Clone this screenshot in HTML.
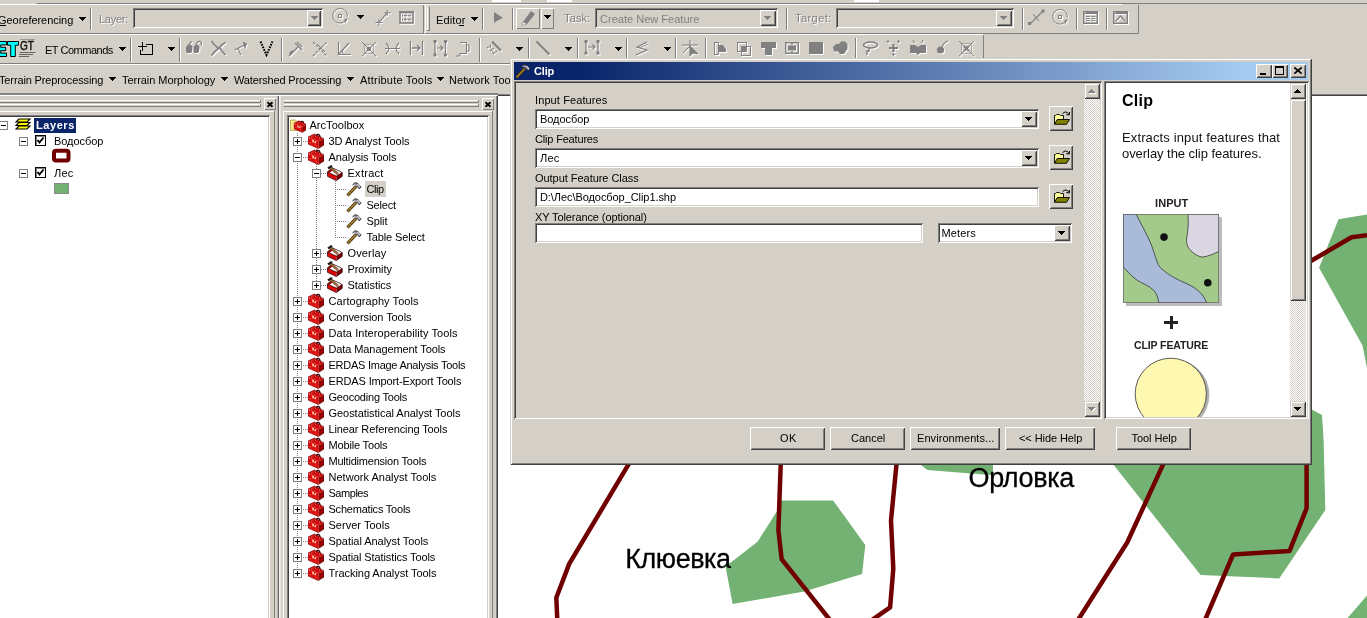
<!DOCTYPE html>
<html><head><meta charset="utf-8"><title>Clip</title><style>
html,body{margin:0;padding:0;}
body{width:1367px;height:618px;overflow:hidden;background:#D4D0C8;position:relative;font-family:"Liberation Sans",sans-serif;font-size:11px;}
div,span.t,svg{position:absolute;}
span.t{white-space:pre;display:block;}
</style></head><body>
<div id="w" style="left:0;top:0;width:1367px;height:618px;will-change:transform">
<div style="left:498px;top:96px;width:869px;height:522px;background:#fff"></div>
<svg style="left:0px;top:0px;" width="1367" height="618" viewBox="0 0 1367 618">
<g fill="#73B273" stroke="none">
<polygon points="781.3,500.4 833.1,500.4 865.3,544.9 862.1,573.9 804.1,591.6 732.6,604 725.6,566.5 757.5,541.8 777.2,510.7"/>
<polygon points="915,455 920.5,464.6 927.3,470 993,475.2 993,455"/>
<polygon points="1094,440 1200.6,575 1279.2,578.4 1325.3,510 1323.6,440 1322,415 1312.7,410 1290,400"/>
<polygon points="1338.5,219.2 1367,214.6 1367,368 1362.5,345.4 1319.1,267.7"/>
<polygon points="1367,595.4 1347.6,618 1367,618"/>
</g>
<g fill="none" stroke="#700000" stroke-width="4.500" stroke-linejoin="round">
<polyline points="640,445 628.7,464.1 569.2,563.9 556.3,597.7 557.3,620"/>
<polyline points="780.9,445 780.7,464.1 778.4,530.1 781.6,559.1 830,620"/>
<polyline points="897,445 896.5,464.1 891,520.5 893.3,568.7 890.1,607.4 872,620"/>
<polyline points="1172,445 1163,464.6 1127.2,542.5 1078,620"/>
<polyline points="1306.6,445 1306.6,508.3 1289.5,551 1233.1,554.5 1205,620"/>
<polyline points="1305,264.5 1312.6,260 1351.5,237.3 1367,235.3"/>
</g>
</svg>
<span id="t1" class="t " style="left:625.3px;top:545.5px;font-size:27px;line-height:27px;color:#000;letter-spacing:-0.463px;-webkit-text-stroke:0.300px #000;">Клюевка</span>
<span id="t2" class="t " style="left:968.5px;top:464.5px;font-size:27px;line-height:27px;color:#000;letter-spacing:-0.366px;-webkit-text-stroke:0.300px #000;">Орловка</span>
<div style="left:0px;top:0px;width:1367px;height:93px;background:#D4D0C8"></div>
<div style="left:37px;top:3px;width:1330px;height:1px;background:#808080"></div>
<div style="left:492px;top:0px;width:29px;height:2px;background:#fff"></div>
<div style="left:547px;top:0px;width:25px;height:2px;background:#fff"></div>
<div style="left:854px;top:0px;width:25px;height:2px;background:#fff"></div>
<div style="left:0px;top:4px;width:1122px;height:1px;background:#FFFFFF"></div>
<div style="left:0px;top:33px;width:424px;height:1px;background:#808080"></div>
<div style="left:423px;top:5px;width:1px;height:28px;background:#808080"></div>
<div style="left:425px;top:5px;width:1px;height:28px;background:#FFFFFF"></div>
<div style="left:425px;top:33px;width:714px;height:1px;background:#808080"></div>
<div style="left:1138px;top:5px;width:1px;height:29px;background:#808080"></div>
<div style="left:427px;top:7px;width:1px;height:23px;background:#FFFFFF"></div>
<div style="left:428px;top:7px;width:1px;height:23px;background:#D4D0C8"></div>
<div style="left:429px;top:7px;width:1px;height:23px;background:#808080"></div>
<div style="left:427px;top:30px;width:3px;height:1px;background:#808080"></div>
<span id="t3" class="t " style="left:-2px;top:15px;font-size:11px;line-height:11px;color:#000;letter-spacing:-0.039px;">Georeferencing</span>
<div style="left:0px;top:25px;width:6px;height:1px;background:#000"></div>
<div style="left:79px;top:17px;width:7px;height:1px;background:#000"></div>
<div style="left:80px;top:18px;width:5px;height:1px;background:#000"></div>
<div style="left:81px;top:19px;width:3px;height:1px;background:#000"></div>
<div style="left:82px;top:20px;width:1px;height:1px;background:#000"></div>
<div style="left:90px;top:8px;width:1px;height:22px;background:#808080"></div>
<div style="left:91px;top:8px;width:1px;height:22px;background:#FFFFFF"></div>
<span id="t4" class="t " style="left:100px;top:15px;font-size:11px;line-height:11px;color:#fff;letter-spacing:-0.252px;">Layer:</span>
<span id="t5" class="t " style="left:99px;top:14px;font-size:11px;line-height:11px;color:#808080;letter-spacing:-0.252px;">Layer:</span>
<div style="left:133px;top:8px;width:190px;height:20px;background:#D4D0C8;box-shadow:inset 1px 1px 0 #808080,inset -1px -1px 0 #FFFFFF,inset 2px 2px 0 #404040,inset -2px -2px 0 #D4D0C8;"></div>
<div style="left:307px;top:10px;width:14px;height:16px;background:#D4D0C8;box-shadow:inset 1px 1px 0 #FFFFFF,inset -1px -1px 0 #404040,inset 2px 2px 0 #D4D0C8,inset -2px -2px 0 #808080;"></div>
<div style="left:311px;top:16px;width:7px;height:1px;background:#808080"></div>
<div style="left:312px;top:17px;width:5px;height:1px;background:#808080"></div>
<div style="left:313px;top:18px;width:3px;height:1px;background:#808080"></div>
<div style="left:314px;top:19px;width:1px;height:1px;background:#808080"></div>
<svg style="left:332px;top:8px;" width="18" height="18" viewBox="0 0 18 18"><g transform="translate(1,1)"><path d="M14.300,11.500 A7.300,7.300 0 1 1 15.300,8.500" fill="none" stroke="#fff" stroke-width="1"/><rect x="6.500" y="6.500" width="3" height="3" fill="none" stroke="#fff"/><polygon points="12.500,11 15.800,10.500 13,15.500" fill="#fff"/></g><g><path d="M14.300,11.500 A7.300,7.300 0 1 1 15.300,8.500" fill="none" stroke="#808080" stroke-width="1"/><rect x="6.500" y="6.500" width="3" height="3" fill="none" stroke="#808080"/><polygon points="12.500,11 15.800,10.500 13,15.500" fill="#808080"/></g></svg>
<div style="left:357px;top:15px;width:7px;height:1px;background:#000"></div>
<div style="left:358px;top:16px;width:5px;height:1px;background:#000"></div>
<div style="left:359px;top:17px;width:3px;height:1px;background:#000"></div>
<div style="left:360px;top:18px;width:1px;height:1px;background:#000"></div>
<svg style="left:374px;top:9px;" width="19" height="19" viewBox="0 0 19 19"><g transform="translate(1,1)"><path d="M4.800,13.700 L13.200,3.800" stroke="#fff" stroke-width="1.100"/><path d="M1.500,13.500 h7 M4.800,10.500 v6.500 M10.300,3.800 h6.500 M13.200,1 v6" stroke="#fff" stroke-width="1"/></g><g><path d="M4.800,13.700 L13.200,3.800" stroke="#808080" stroke-width="1.100"/><path d="M1.500,13.500 h7 M4.800,10.500 v6.500 M10.300,3.800 h6.500 M13.200,1 v6" stroke="#808080" stroke-width="1"/></g></svg>
<svg style="left:399px;top:11px;" width="16" height="14" viewBox="0 0 16 14"><g transform="translate(1,1)"><rect x="1" y="1" width="13" height="11" fill="none" stroke="#fff" stroke-width="1.600"/><rect x="0.200" y="0.200" width="14.600" height="2.200" fill="#fff"/><path d="M3,4.500 h9 M3,8.500 h9" stroke="#fff" stroke-width="1" stroke-dasharray="1,1"/><path d="M3.500,3.500 v2 M6.500,3.500 v2 M11,3.500 v2 M3.500,7.500 v2 M6.500,7.500 v2 M11,7.500 v2" stroke="#fff" stroke-width="1"/></g><g><rect x="1" y="1" width="13" height="11" fill="none" stroke="#808080" stroke-width="1.600"/><rect x="0.200" y="0.200" width="14.600" height="2.200" fill="#808080"/><path d="M3,4.500 h9 M3,8.500 h9" stroke="#808080" stroke-width="1" stroke-dasharray="1,1"/><path d="M3.500,3.500 v2 M6.500,3.500 v2 M11,3.500 v2 M3.500,7.500 v2 M6.500,7.500 v2 M11,7.500 v2" stroke="#808080" stroke-width="1"/></g></svg>
<span id="t6" class="t " style="left:436px;top:15px;font-size:11px;line-height:11px;color:#000;letter-spacing:0.114px;">Editor</span>
<div style="left:459px;top:25px;width:5px;height:1px;background:#000"></div>
<div style="left:471px;top:17px;width:7px;height:1px;background:#000"></div>
<div style="left:472px;top:18px;width:5px;height:1px;background:#000"></div>
<div style="left:473px;top:19px;width:3px;height:1px;background:#000"></div>
<div style="left:474px;top:20px;width:1px;height:1px;background:#000"></div>
<div style="left:482px;top:8px;width:1px;height:22px;background:#808080"></div>
<div style="left:483px;top:8px;width:1px;height:22px;background:#FFFFFF"></div>
<svg style="left:492px;top:11px;" width="14" height="14" viewBox="0 0 14 14"><polygon points="2,1 2,12 5.5,9.5 11,7" fill="#808080"/></svg>
<div style="left:512px;top:8px;width:1px;height:22px;background:#808080"></div>
<div style="left:513px;top:8px;width:1px;height:22px;background:#FFFFFF"></div>
<div style="left:516px;top:8px;width:24px;height:21px;background:#D4D0C8;box-shadow:inset 1px 1px 0 #FFFFFF,inset -1px -1px 0 #808080;"></div>
<svg style="left:519px;top:9px;" width="18" height="18" viewBox="0 0 18 18"><polygon points="4,13 12,2 16,5 8,15 3,16.5" fill="#808080"/><polygon points="4,13 8,15 3,16.5" fill="#fff" stroke="#808080" stroke-width="0.6"/></svg>
<div style="left:541px;top:8px;width:13px;height:21px;background:#D4D0C8;box-shadow:inset 1px 1px 0 #FFFFFF,inset -1px -1px 0 #808080;"></div>
<div style="left:544px;top:15px;width:7px;height:1px;background:#000"></div>
<div style="left:545px;top:16px;width:5px;height:1px;background:#000"></div>
<div style="left:546px;top:17px;width:3px;height:1px;background:#000"></div>
<div style="left:547px;top:18px;width:1px;height:1px;background:#000"></div>
<span id="t7" class="t " style="left:565px;top:14px;font-size:11px;line-height:11px;color:#fff;letter-spacing:0.158px;">Task:</span>
<span id="t8" class="t " style="left:564px;top:13px;font-size:11px;line-height:11px;color:#808080;letter-spacing:0.158px;">Task:</span>
<div style="left:595px;top:8px;width:183px;height:20px;background:#D4D0C8;box-shadow:inset 1px 1px 0 #808080,inset -1px -1px 0 #FFFFFF,inset 2px 2px 0 #404040,inset -2px -2px 0 #D4D0C8;"></div>
<span id="t9" class="t " style="left:600px;top:14px;font-size:11px;line-height:11px;color:#808080;letter-spacing:0.016px;">Create New Feature</span>
<div style="left:760px;top:10px;width:16px;height:16px;background:#D4D0C8;box-shadow:inset 1px 1px 0 #FFFFFF,inset -1px -1px 0 #404040,inset 2px 2px 0 #D4D0C8,inset -2px -2px 0 #808080;"></div>
<div style="left:764px;top:16px;width:7px;height:1px;background:#808080"></div>
<div style="left:765px;top:17px;width:5px;height:1px;background:#808080"></div>
<div style="left:766px;top:18px;width:3px;height:1px;background:#808080"></div>
<div style="left:767px;top:19px;width:1px;height:1px;background:#808080"></div>
<div style="left:786px;top:8px;width:1px;height:22px;background:#808080"></div>
<div style="left:787px;top:8px;width:1px;height:22px;background:#FFFFFF"></div>
<span id="t10" class="t " style="left:796px;top:14px;font-size:11px;line-height:11px;color:#fff;letter-spacing:0.447px;">Target:</span>
<span id="t11" class="t " style="left:795px;top:13px;font-size:11px;line-height:11px;color:#808080;letter-spacing:0.447px;">Target:</span>
<div style="left:836px;top:8px;width:178px;height:20px;background:#D4D0C8;box-shadow:inset 1px 1px 0 #808080,inset -1px -1px 0 #FFFFFF,inset 2px 2px 0 #404040,inset -2px -2px 0 #D4D0C8;"></div>
<div style="left:996px;top:10px;width:16px;height:16px;background:#D4D0C8;box-shadow:inset 1px 1px 0 #FFFFFF,inset -1px -1px 0 #404040,inset 2px 2px 0 #D4D0C8,inset -2px -2px 0 #808080;"></div>
<div style="left:1000px;top:16px;width:7px;height:1px;background:#808080"></div>
<div style="left:1001px;top:17px;width:5px;height:1px;background:#808080"></div>
<div style="left:1002px;top:18px;width:3px;height:1px;background:#808080"></div>
<div style="left:1003px;top:19px;width:1px;height:1px;background:#808080"></div>
<div style="left:1022px;top:8px;width:1px;height:22px;background:#808080"></div>
<div style="left:1023px;top:8px;width:1px;height:22px;background:#FFFFFF"></div>
<svg style="left:1027px;top:8px;" width="20" height="20" viewBox="0 0 20 20"><path d="M3,16 L16,3" stroke="#808080" stroke-width="1.2"/><rect x="1" y="14" width="3" height="3" fill="#808080"/><rect x="14.5" y="1.5" width="3" height="3" fill="#808080"/><path d="M6,6 L12,13" stroke="#808080"/></svg>
<svg style="left:1052px;top:9px;" width="18" height="18" viewBox="0 0 18 18"><g transform="translate(1,1)"><path d="M14.300,11.500 A7.300,7.300 0 1 1 15.300,8.500" fill="none" stroke="#fff" stroke-width="1"/><rect x="6.500" y="6.500" width="3" height="3" fill="none" stroke="#fff"/><polygon points="12.500,11 15.800,10.500 13,15.500" fill="#fff"/></g><g><path d="M14.300,11.500 A7.300,7.300 0 1 1 15.300,8.500" fill="none" stroke="#808080" stroke-width="1"/><rect x="6.500" y="6.500" width="3" height="3" fill="none" stroke="#808080"/><polygon points="12.500,11 15.800,10.500 13,15.500" fill="#808080"/></g></svg>
<div style="left:1076px;top:8px;width:1px;height:22px;background:#808080"></div>
<div style="left:1077px;top:8px;width:1px;height:22px;background:#FFFFFF"></div>
<svg style="left:1083px;top:11px;" width="16" height="14" viewBox="0 0 16 14"><g transform="translate(1,1)"><rect x="0.750" y="0.750" width="13.500" height="11.500" fill="none" stroke="#fff" stroke-width="1.500"/><rect x="0" y="0" width="15" height="3" fill="#fff"/><rect x="1.500" y="1" width="1" height="1" fill="#fff"/><path d="M3,5.500 h4 M8.500,5.500 h4 M3,7.500 h4 M8.500,7.500 h4 M3,9.500 h4 M8.500,9.500 h4" stroke="#fff"/></g><g><rect x="0.750" y="0.750" width="13.500" height="11.500" fill="none" stroke="#808080" stroke-width="1.500"/><rect x="0" y="0" width="15" height="3" fill="#808080"/><rect x="1.500" y="1" width="1" height="1" fill="#fff"/><path d="M3,5.500 h4 M8.500,5.500 h4 M3,7.500 h4 M8.500,7.500 h4 M3,9.500 h4 M8.500,9.500 h4" stroke="#808080"/></g></svg>
<div style="left:1106px;top:8px;width:1px;height:22px;background:#808080"></div>
<div style="left:1107px;top:8px;width:1px;height:22px;background:#FFFFFF"></div>
<svg style="left:1113px;top:11px;" width="16" height="14" viewBox="0 0 16 14"><g transform="translate(1,1)"><rect x="0.750" y="0.750" width="13.500" height="11.500" fill="none" stroke="#fff" stroke-width="1.500"/><rect x="0" y="0" width="15" height="3" fill="#fff"/><rect x="1.500" y="1" width="1" height="1" fill="#fff"/><path d="M2.500,10.500 L7.500,5 L12.500,10.500" fill="none" stroke="#fff" stroke-width="1.200"/></g><g><rect x="0.750" y="0.750" width="13.500" height="11.500" fill="none" stroke="#808080" stroke-width="1.500"/><rect x="0" y="0" width="15" height="3" fill="#808080"/><rect x="1.500" y="1" width="1" height="1" fill="#fff"/><path d="M2.500,10.500 L7.500,5 L12.500,10.500" fill="none" stroke="#808080" stroke-width="1.200"/></g></svg>
<div style="left:0px;top:34px;width:983px;height:1px;background:#FFFFFF"></div>
<div style="left:0px;top:63px;width:984px;height:1px;background:#808080"></div>
<div style="left:983px;top:35px;width:1px;height:28px;background:#808080"></div>
<svg style="left:0px;top:38px;" width="38" height="24" viewBox="0 0 38 24"><g fill="#00FFFF" stroke="#000" stroke-width="1">
<path d="M-3.5,3.5 h10 v3.400 h-5.800 v2.400 h5 v3.400 h-5 v2.400 h5.800 v3.400 h-10 z"/>
<path d="M7.500,3.500 h11 v3.700 h-3.200 v11.300 h-4.600 v-11.300 h-3.200 z"/></g>
<text x="20" y="12.300" font-family="Liberation Sans" font-size="12" fill="#111" stroke="#111" stroke-width="0.450" textLength="14" lengthAdjust="spacingAndGlyphs">GT</text>
<path d="M20,1.500 h15" stroke="#999" stroke-width="1"/>
<path d="M19.500,14.500 h16 M19,16.500 h14 M19,18.500 h10" stroke="#666" stroke-width="1"/></svg>
<span id="t12" class="t " style="left:45px;top:45px;font-size:11px;line-height:11px;color:#000;letter-spacing:-0.484px;">ET Commands</span>
<div style="left:119px;top:47px;width:7px;height:1px;background:#000"></div>
<div style="left:120px;top:48px;width:5px;height:1px;background:#000"></div>
<div style="left:121px;top:49px;width:3px;height:1px;background:#000"></div>
<div style="left:122px;top:50px;width:1px;height:1px;background:#000"></div>
<div style="left:130px;top:38px;width:1px;height:24px;background:#808080"></div>
<div style="left:131px;top:38px;width:1px;height:24px;background:#FFFFFF"></div>
<svg style="left:137px;top:39px;" width="18" height="18" viewBox="0 0 18 18"><rect x="3.500" y="5.500" width="12" height="10" fill="none" stroke="#000"/><rect x="2" y="4" width="7" height="7" fill="#D4D0C8"/><path d="M3.500,11 v4 M9,5.500 h6" stroke="#000"/><path d="M1,7.500 h9 M5.500,3 v9" stroke="#000"/></svg>
<div style="left:168px;top:47px;width:7px;height:1px;background:#000"></div>
<div style="left:169px;top:48px;width:5px;height:1px;background:#000"></div>
<div style="left:170px;top:49px;width:3px;height:1px;background:#000"></div>
<div style="left:171px;top:50px;width:1px;height:1px;background:#000"></div>
<div style="left:179px;top:38px;width:1px;height:24px;background:#808080"></div>
<div style="left:180px;top:38px;width:1px;height:24px;background:#FFFFFF"></div>
<svg style="left:185px;top:40px;" width="19" height="17" viewBox="0 0 19 17"><g transform="translate(1,1)"><polygon points="1,7 3,4.700 6.500,4.700 7.500,6.500 7,12 5.500,13 2,13 1,11.500" fill="#fff"/><polygon points="8.500,7 10.500,4.700 13.500,4.700 14.500,6.500 14,12 12.500,13 9.500,13 8.500,11.500" fill="#fff"/><path d="M3.500,5 L6.500,1.500 M10.500,5 L13,1.500 M13,1.500 Q16.500,0.500 16.500,5.500" fill="none" stroke="#fff" stroke-width="1.200"/></g><g><polygon points="1,7 3,4.700 6.500,4.700 7.500,6.500 7,12 5.500,13 2,13 1,11.500" fill="#808080"/><polygon points="8.500,7 10.500,4.700 13.500,4.700 14.500,6.500 14,12 12.500,13 9.500,13 8.500,11.500" fill="#808080"/><path d="M3.500,5 L6.500,1.500 M10.500,5 L13,1.500 M13,1.500 Q16.500,0.500 16.500,5.500" fill="none" stroke="#808080" stroke-width="1.200"/></g></svg>
<svg style="left:210px;top:40px;" width="18" height="18" viewBox="0 0 18 18"><g transform="translate(1,1)"><path d="M1.500,1 Q4,5 8.500,8.500 Q5,11 1.500,15.500 M15.500,2.500 Q11.500,4.500 9.500,7.500 Q12,11 15.500,15" fill="none" stroke="#fff" stroke-width="1.600"/></g><g><path d="M1.500,1 Q4,5 8.500,8.500 Q5,11 1.500,15.500 M15.500,2.500 Q11.500,4.500 9.500,7.500 Q12,11 15.500,15" fill="none" stroke="#808080" stroke-width="1.600"/></g></svg>
<svg style="left:234px;top:41px;" width="15" height="16" viewBox="0 0 15 16"><g transform="translate(1,1)"><path d="M0.500,9 L12.500,3 M4,7.500 L7,14 M9.500,1.500 L12.500,3 L11,6.500 Z" fill="#fff" stroke="#fff" stroke-width="1.100"/></g><g><path d="M0.500,9 L12.500,3 M4,7.500 L7,14 M9.500,1.500 L12.500,3 L11,6.500 Z" fill="#808080" stroke="#808080" stroke-width="1.100"/></g></svg>
<svg style="left:259px;top:40px;" width="16" height="17" viewBox="0 0 16 17"><path d="M1.500,1.500 L7.500,15 L13.500,1.500" fill="none" stroke="#000" stroke-width="2" stroke-dasharray="1.700,1.100"/></svg>
<div style="left:281px;top:38px;width:1px;height:24px;background:#808080"></div>
<div style="left:282px;top:38px;width:1px;height:24px;background:#FFFFFF"></div>
<svg style="left:288px;top:41px;" width="18" height="17" viewBox="0 0 18 17"><g transform="translate(1,1)"><path d="M1,15 L10,6 M7,2 L14,9 M9,1 l5,5" fill="none" stroke="#fff" stroke-width="1.3"/><path d="M2,13 l3,-3" stroke="#fff" stroke-width="2.5"/></g><g><path d="M1,15 L10,6 M7,2 L14,9 M9,1 l5,5" fill="none" stroke="#808080" stroke-width="1.3"/><path d="M2,13 l3,-3" stroke="#808080" stroke-width="2.5"/></g></svg>
<svg style="left:312px;top:41px;" width="18" height="17" viewBox="0 0 18 17"><g transform="translate(1,1)"><path d="M1,15 L15,1 M1,1 L15,15" fill="none" stroke="#fff" stroke-width="1.2" stroke-dasharray="3,1"/><path d="M5,3 L13,11" stroke="#fff" stroke-width="1"/></g><g><path d="M1,15 L15,1 M1,1 L15,15" fill="none" stroke="#808080" stroke-width="1.2" stroke-dasharray="3,1"/><path d="M5,3 L13,11" stroke="#808080" stroke-width="1"/></g></svg>
<svg style="left:337px;top:41px;" width="16" height="16" viewBox="0 0 16 16"><g transform="translate(1,1)"><path d="M1.5,1 V13.500 H14 M1.5,13.5 L12,2" fill="none" stroke="#fff" stroke-width="1.2"/><path d="M6,13 a5,5 0 0 0 -2,-4" fill="none" stroke="#fff"/></g><g><path d="M1.5,1 V13.500 H14 M1.5,13.5 L12,2" fill="none" stroke="#808080" stroke-width="1.2"/><path d="M6,13 a5,5 0 0 0 -2,-4" fill="none" stroke="#808080"/></g></svg>
<svg style="left:361px;top:41px;" width="17" height="17" viewBox="0 0 17 17"><g transform="translate(1,1)"><path d="M1,1 L15,15 M15,1 L1,15" stroke="#fff" stroke-width="1"/><rect x="3.5" y="3.5" width="9" height="9" fill="none" stroke="#fff" stroke-dasharray="1,1"/><rect x="6" y="6" width="4" height="4" fill="#fff"/></g><g><path d="M1,1 L15,15 M15,1 L1,15" stroke="#808080" stroke-width="1"/><rect x="3.5" y="3.5" width="9" height="9" fill="none" stroke="#808080" stroke-dasharray="1,1"/><rect x="6" y="6" width="4" height="4" fill="#808080"/></g></svg>
<svg style="left:385px;top:42px;" width="16" height="14" viewBox="0 0 16 14"><g transform="translate(1,1)"><path d="M1,1 Q7,6.500 1,12 M14,1 Q8,6.500 14,12 M0,6.500 H15" fill="none" stroke="#fff" stroke-width="1.2"/></g><g><path d="M1,1 Q7,6.500 1,12 M14,1 Q8,6.500 14,12 M0,6.500 H15" fill="none" stroke="#808080" stroke-width="1.2"/></g></svg>
<svg style="left:409px;top:41px;" width="16" height="16" viewBox="0 0 16 16"><g transform="translate(1,1)"><path d="M1.500,0 V14 M13.500,0 V14 M3,7 H11 M8,4 l3,3 l-3,3" fill="none" stroke="#fff" stroke-width="1.3"/></g><g><path d="M1.500,0 V14 M13.500,0 V14 M3,7 H11 M8,4 l3,3 l-3,3" fill="none" stroke="#808080" stroke-width="1.3"/></g></svg>
<svg style="left:433px;top:40px;" width="16" height="18" viewBox="0 0 16 18"><g transform="translate(1,1)"><path d="M2,1 V15 M12.500,1 V15 M4,8 H10 M7.500,5.500 l2.500,2.500 l-2.500,2.500" fill="none" stroke="#fff" stroke-width="1.2"/><circle cx="2" cy="1.500" r="1.700" fill="#fff"/><circle cx="2" cy="15" r="1.700" fill="#fff"/><circle cx="12.500" cy="1.500" r="1.700" fill="#fff"/><circle cx="12.500" cy="15" r="1.700" fill="#fff"/></g><g><path d="M2,1 V15 M12.500,1 V15 M4,8 H10 M7.500,5.500 l2.500,2.500 l-2.500,2.500" fill="none" stroke="#808080" stroke-width="1.2"/><circle cx="2" cy="1.500" r="1.700" fill="#808080"/><circle cx="2" cy="15" r="1.700" fill="#808080"/><circle cx="12.500" cy="1.500" r="1.700" fill="#808080"/><circle cx="12.500" cy="15" r="1.700" fill="#808080"/></g></svg>
<svg style="left:456px;top:41px;" width="17" height="17" viewBox="0 0 17 17"><g transform="translate(1,1)"><path d="M4,1.500 H10.500 V4 H13 V10 H10.500 V12.500 H4 V15 H0" fill="none" stroke="#fff" stroke-width="1.100"/><path d="M10.500,4 V10" stroke="#fff"/></g><g><path d="M4,1.500 H10.500 V4 H13 V10 H10.500 V12.500 H4 V15 H0" fill="none" stroke="#808080" stroke-width="1.100"/><path d="M10.500,4 V10" stroke="#808080"/></g></svg>
<div style="left:479px;top:38px;width:1px;height:24px;background:#808080"></div>
<div style="left:480px;top:38px;width:1px;height:24px;background:#FFFFFF"></div>
<svg style="left:486px;top:41px;" width="18" height="17" viewBox="0 0 18 17"><g transform="translate(1,1)"><path d="M6,0.500 L15,9.500" stroke="#fff" stroke-width="2.200"/><path d="M1,7 l4,-3 M4,10 l4,-3 M7,13 l4,-3 M4,5 l3,7" stroke="#fff" stroke-width="1.100" stroke-dasharray="2,1"/></g><g><path d="M6,0.500 L15,9.500" stroke="#808080" stroke-width="2.200"/><path d="M1,7 l4,-3 M4,10 l4,-3 M7,13 l4,-3 M4,5 l3,7" stroke="#808080" stroke-width="1.100" stroke-dasharray="2,1"/></g></svg>
<div style="left:516px;top:47px;width:7px;height:1px;background:#000"></div>
<div style="left:517px;top:48px;width:5px;height:1px;background:#000"></div>
<div style="left:518px;top:49px;width:3px;height:1px;background:#000"></div>
<div style="left:519px;top:50px;width:1px;height:1px;background:#000"></div>
<div style="left:528px;top:38px;width:1px;height:24px;background:#808080"></div>
<div style="left:529px;top:38px;width:1px;height:24px;background:#FFFFFF"></div>
<svg style="left:536px;top:41px;" width="16" height="16" viewBox="0 0 16 16"><g transform="translate(1,1)"><path d="M0.500,0.500 L13.500,13.500" stroke="#fff" stroke-width="2"/></g><g><path d="M0.500,0.500 L13.500,13.500" stroke="#808080" stroke-width="2"/></g></svg>
<div style="left:565px;top:47px;width:7px;height:1px;background:#000"></div>
<div style="left:566px;top:48px;width:5px;height:1px;background:#000"></div>
<div style="left:567px;top:49px;width:3px;height:1px;background:#000"></div>
<div style="left:568px;top:50px;width:1px;height:1px;background:#000"></div>
<div style="left:577px;top:38px;width:1px;height:24px;background:#808080"></div>
<div style="left:578px;top:38px;width:1px;height:24px;background:#FFFFFF"></div>
<svg style="left:584px;top:40px;" width="18" height="16" viewBox="0 0 18 16"><g transform="translate(1,1)"><path d="M2,1 V13 M14,1 V13 M4,7 H11 M8.500,4.500 l2.500,2.500 l-2.500,2.500" fill="none" stroke="#fff" stroke-width="1.200"/><rect x="0.500" y="0" width="3" height="3" fill="#fff"/><rect x="0.500" y="11.500" width="3" height="3" fill="#fff"/><rect x="12.500" y="0" width="3" height="3" fill="#fff"/><rect x="12.500" y="11.500" width="3" height="3" fill="#fff"/></g><g><path d="M2,1 V13 M14,1 V13 M4,7 H11 M8.500,4.500 l2.500,2.500 l-2.500,2.500" fill="none" stroke="#808080" stroke-width="1.200"/><rect x="0.500" y="0" width="3" height="3" fill="#808080"/><rect x="0.500" y="11.500" width="3" height="3" fill="#808080"/><rect x="12.500" y="0" width="3" height="3" fill="#808080"/><rect x="12.500" y="11.500" width="3" height="3" fill="#808080"/></g></svg>
<div style="left:615px;top:47px;width:7px;height:1px;background:#000"></div>
<div style="left:616px;top:48px;width:5px;height:1px;background:#000"></div>
<div style="left:617px;top:49px;width:3px;height:1px;background:#000"></div>
<div style="left:618px;top:50px;width:1px;height:1px;background:#000"></div>
<div style="left:626px;top:38px;width:1px;height:24px;background:#808080"></div>
<div style="left:627px;top:38px;width:1px;height:24px;background:#FFFFFF"></div>
<svg style="left:635px;top:41px;" width="15" height="16" viewBox="0 0 15 16"><g transform="translate(1,1)"><path d="M12,1 L2,6 L12,9 L1,14" fill="none" stroke="#fff" stroke-width="1.100"/><path d="M13,3 L4,7" stroke="#fff" stroke-width="0.800"/></g><g><path d="M12,1 L2,6 L12,9 L1,14" fill="none" stroke="#808080" stroke-width="1.100"/><path d="M13,3 L4,7" stroke="#808080" stroke-width="0.800"/></g></svg>
<div style="left:664px;top:47px;width:7px;height:1px;background:#000"></div>
<div style="left:665px;top:48px;width:5px;height:1px;background:#000"></div>
<div style="left:666px;top:49px;width:3px;height:1px;background:#000"></div>
<div style="left:667px;top:50px;width:1px;height:1px;background:#000"></div>
<div style="left:675px;top:38px;width:1px;height:24px;background:#808080"></div>
<div style="left:676px;top:38px;width:1px;height:24px;background:#FFFFFF"></div>
<svg style="left:681px;top:40px;" width="19" height="17" viewBox="0 0 19 17"><g transform="translate(1,1)"><path d="M9,0 V8 M1,5 H17 M2,13 L9,6 M9,6 l0,10 l3,-3 l5,1 z" fill="#fff" stroke="#fff" stroke-width="1"/></g><g><path d="M9,0 V8 M1,5 H17 M2,13 L9,6 M9,6 l0,10 l3,-3 l5,1 z" fill="#808080" stroke="#808080" stroke-width="1"/></g></svg>
<div style="left:705px;top:38px;width:1px;height:24px;background:#808080"></div>
<div style="left:706px;top:38px;width:1px;height:24px;background:#FFFFFF"></div>
<svg style="left:713px;top:41px;" width="15" height="16" viewBox="0 0 15 16"><g transform="translate(1,1)"><rect x="1.500" y="1.500" width="4" height="12" fill="none" stroke="#fff"/><polygon points="6,4 10,4 13,8 13,11 6,11" fill="#fff"/></g><g><rect x="1.500" y="1.500" width="4" height="12" fill="none" stroke="#808080"/><polygon points="6,4 10,4 13,8 13,11 6,11" fill="#808080"/></g></svg>
<svg style="left:736px;top:41px;" width="17" height="17" viewBox="0 0 17 17"><g transform="translate(1,1)"><rect x="1.500" y="1.500" width="9" height="9" fill="none" stroke="#fff"/><rect x="5.500" y="5.500" width="9" height="9" fill="none" stroke="#fff"/><rect x="6" y="6" width="4.500" height="4.500" fill="#fff"/></g><g><rect x="1.500" y="1.500" width="9" height="9" fill="none" stroke="#808080"/><rect x="5.500" y="5.500" width="9" height="9" fill="none" stroke="#808080"/><rect x="6" y="6" width="4.500" height="4.500" fill="#808080"/></g></svg>
<svg style="left:761px;top:42px;" width="17" height="15" viewBox="0 0 17 15"><g transform="translate(1,1)"><polygon points="0,0 15,0 15,6 11,6 11,13 4,13 4,6 0,6" fill="#fff"/></g><g><polygon points="0,0 15,0 15,6 11,6 11,13 4,13 4,6 0,6" fill="#808080"/></g></svg>
<svg style="left:785px;top:42px;" width="15" height="13" viewBox="0 0 15 13"><g transform="translate(1,1)"><rect x="0.700" y="0.700" width="12.600" height="10.600" fill="none" stroke="#fff" stroke-width="1.400"/><rect x="3" y="3.500" width="8" height="5" fill="#fff"/><path d="M7,0 v3 M7,9 v3" stroke="#fff" stroke-width="1.500"/></g><g><rect x="0.700" y="0.700" width="12.600" height="10.600" fill="none" stroke="#808080" stroke-width="1.400"/><rect x="3" y="3.500" width="8" height="5" fill="#808080"/><path d="M7,0 v3 M7,9 v3" stroke="#808080" stroke-width="1.500"/></g></svg>
<svg style="left:809px;top:42px;" width="15" height="13" viewBox="0 0 15 13"><g transform="translate(1,1)"><rect x="0" y="0" width="14" height="12" fill="#fff"/></g><g><rect x="0" y="0" width="14" height="12" fill="#808080"/></g></svg>
<svg style="left:833px;top:41px;" width="16" height="15" viewBox="0 0 16 15"><g transform="translate(1,1)"><path d="M0,6 L3,3 H6 L8,0.500 H12 L14.500,3 V8 L11,13 H7 L5,10.500 H1 Z" fill="#fff"/></g><g><path d="M0,6 L3,3 H6 L8,0.500 H12 L14.500,3 V8 L11,13 H7 L5,10.500 H1 Z" fill="#808080"/></g></svg>
<div style="left:855px;top:38px;width:1px;height:24px;background:#808080"></div>
<div style="left:856px;top:38px;width:1px;height:24px;background:#FFFFFF"></div>
<svg style="left:862px;top:41px;" width="18" height="16" viewBox="0 0 18 16"><g transform="translate(1,1)"><ellipse cx="8.500" cy="4" rx="7" ry="3" fill="none" stroke="#fff" stroke-width="1.600"/><path d="M7,7 V10 H5 V14" fill="none" stroke="#fff" stroke-width="1.500"/></g><g><ellipse cx="8.500" cy="4" rx="7" ry="3" fill="none" stroke="#808080" stroke-width="1.600"/><path d="M7,7 V10 H5 V14" fill="none" stroke="#808080" stroke-width="1.500"/></g></svg>
<svg style="left:886px;top:40px;" width="16" height="17" viewBox="0 0 16 17"><g transform="translate(1,1)"><path d="M7.500,4 V12 M3,8 H12" stroke="#fff" stroke-width="2.200"/><path d="M2,0 v3 M0.500,1.500 h3 M12.500,0 v3 M11,1.500 h3 M7.500,13 v3 M6,14.500 h3" stroke="#fff" stroke-width="0.900"/></g><g><path d="M7.500,4 V12 M3,8 H12" stroke="#808080" stroke-width="2.200"/><path d="M2,0 v3 M0.500,1.500 h3 M12.500,0 v3 M11,1.500 h3 M7.500,13 v3 M6,14.500 h3" stroke="#808080" stroke-width="0.900"/></g></svg>
<svg style="left:910px;top:40px;" width="18" height="16" viewBox="0 0 18 16"><g transform="translate(1,1)"><path d="M0,5 H5 L8,7 L11,5 H16 V13 H10 L8,15 L6,13 H0 Z" fill="#fff"/><path d="M3,0 l1.500,3 M13,0 l-1.500,3" stroke="#fff"/></g><g><path d="M0,5 H5 L8,7 L11,5 H16 V13 H10 L8,15 L6,13 H0 Z" fill="#808080"/><path d="M3,0 l1.500,3 M13,0 l-1.500,3" stroke="#808080"/></g></svg>
<svg style="left:936px;top:40px;" width="14" height="16" viewBox="0 0 14 16"><g transform="translate(1,1)"><circle cx="4.500" cy="10" r="3.600" fill="#fff"/><path d="M6,7 Q8,2 12,1" fill="none" stroke="#fff" stroke-width="1.200"/></g><g><circle cx="4.500" cy="10" r="3.600" fill="#808080"/><path d="M6,7 Q8,2 12,1" fill="none" stroke="#808080" stroke-width="1.200"/></g></svg>
<svg style="left:958px;top:40px;" width="19" height="18" viewBox="0 0 19 18"><g transform="translate(1,1)"><path d="M1,1 L16,16 M16,1 L1,16" stroke="#fff" stroke-width="0.900"/><rect x="3.500" y="3.500" width="10" height="10" fill="none" stroke="#fff" stroke-dasharray="1,1"/><path d="M6,6 L11,11 M11,6 L6,11" stroke="#fff" stroke-width="2"/></g><g><path d="M1,1 L16,16 M16,1 L1,16" stroke="#808080" stroke-width="0.900"/><rect x="3.500" y="3.500" width="10" height="10" fill="none" stroke="#808080" stroke-dasharray="1,1"/><path d="M6,6 L11,11 M11,6 L6,11" stroke="#808080" stroke-width="2"/></g></svg>
<div style="left:0px;top:64px;width:1312px;height:1px;background:#FFFFFF"></div>
<span id="t13" class="t " style="left:-1px;top:75px;font-size:11px;line-height:11px;color:#000;letter-spacing:-0.134px;">Terrain Preprocessing</span>
<div style="left:109px;top:77px;width:7px;height:1px;background:#000"></div>
<div style="left:110px;top:78px;width:5px;height:1px;background:#000"></div>
<div style="left:111px;top:79px;width:3px;height:1px;background:#000"></div>
<div style="left:112px;top:80px;width:1px;height:1px;background:#000"></div>
<span id="t14" class="t " style="left:122px;top:75px;font-size:11px;line-height:11px;color:#000;letter-spacing:-0.049px;">Terrain Morphology</span>
<div style="left:221px;top:77px;width:7px;height:1px;background:#000"></div>
<div style="left:222px;top:78px;width:5px;height:1px;background:#000"></div>
<div style="left:223px;top:79px;width:3px;height:1px;background:#000"></div>
<div style="left:224px;top:80px;width:1px;height:1px;background:#000"></div>
<span id="t15" class="t " style="left:234px;top:75px;font-size:11px;line-height:11px;color:#000;letter-spacing:-0.155px;">Watershed Processing</span>
<div style="left:347px;top:77px;width:7px;height:1px;background:#000"></div>
<div style="left:348px;top:78px;width:5px;height:1px;background:#000"></div>
<div style="left:349px;top:79px;width:3px;height:1px;background:#000"></div>
<div style="left:350px;top:80px;width:1px;height:1px;background:#000"></div>
<span id="t16" class="t " style="left:360px;top:75px;font-size:11px;line-height:11px;color:#000;letter-spacing:0.200px;">Attribute Tools</span>
<div style="left:437px;top:77px;width:7px;height:1px;background:#000"></div>
<div style="left:438px;top:78px;width:5px;height:1px;background:#000"></div>
<div style="left:439px;top:79px;width:3px;height:1px;background:#000"></div>
<div style="left:440px;top:80px;width:1px;height:1px;background:#000"></div>
<span id="t17" class="t " style="left:449px;top:75px;font-size:11px;line-height:11px;color:#000;letter-spacing:0.077px;">Network Tools</span>
<div style="left:527px;top:77px;width:7px;height:1px;background:#000"></div>
<div style="left:528px;top:78px;width:5px;height:1px;background:#000"></div>
<div style="left:529px;top:79px;width:3px;height:1px;background:#000"></div>
<div style="left:530px;top:80px;width:1px;height:1px;background:#000"></div>
<div style="left:0px;top:93px;width:498px;height:1px;background:#808080"></div>
<div style="left:0px;top:94px;width:498px;height:1px;background:#8c8a86"></div>
<div style="left:498px;top:94px;width:869px;height:1px;background:#808080"></div>
<div style="left:498px;top:95px;width:869px;height:1px;background:#404040"></div>
<div style="left:0px;top:95px;width:498px;height:523px;background:#D4D0C8"></div>
<div style="left:0px;top:95px;width:497px;height:1px;background:#FFFFFF"></div>
<div style="left:0px;top:100px;width:261px;height:1px;background:#FFFFFF"></div>
<div style="left:0px;top:101px;width:261px;height:1px;background:#D4D0C8"></div>
<div style="left:0px;top:102px;width:261px;height:1px;background:#808080"></div>
<div style="left:260px;top:100px;width:1px;height:3px;background:#808080"></div>
<div style="left:0px;top:104px;width:261px;height:1px;background:#FFFFFF"></div>
<div style="left:0px;top:105px;width:261px;height:1px;background:#D4D0C8"></div>
<div style="left:0px;top:106px;width:261px;height:1px;background:#808080"></div>
<div style="left:260px;top:104px;width:1px;height:3px;background:#808080"></div>
<div style="left:264px;top:98px;width:12px;height:12px;background:#D4D0C8;box-shadow:inset 1px 1px 0 #FFFFFF,inset -1px -1px 0 #808080;"></div>
<svg style="left:266px;top:100px;" width="8" height="8" viewBox="0 0 8 8"><path d="M1.500,2.300 L6.500,6.700 M6.500,2.300 L1.500,6.700" stroke="#000" stroke-width="1.800"/></svg>
<div style="left:277px;top:96px;width:1px;height:522px;background:#bab6ae"></div>
<div style="left:278px;top:96px;width:1px;height:522px;background:#646464"></div>
<div style="left:279px;top:96px;width:1px;height:522px;background:#f2f2f2"></div>
<div style="left:280px;top:96px;width:1px;height:522px;background:#e6e4e0"></div>
<div style="left:0px;top:111px;width:274px;height:1px;background:#FFFFFF"></div>
<div style="left:274px;top:111px;width:1px;height:507px;background:#808080"></div>
<div style="left:-2px;top:115px;width:272px;height:520px;background:#fff;box-shadow:inset 1px 1px 0 #808080,inset -1px -1px 0 #FFFFFF,inset 2px 2px 0 #404040,inset -2px -2px 0 #D4D0C8;"></div>
<div style="left:284px;top:100px;width:195px;height:1px;background:#FFFFFF"></div>
<div style="left:284px;top:101px;width:195px;height:1px;background:#D4D0C8"></div>
<div style="left:284px;top:102px;width:195px;height:1px;background:#808080"></div>
<div style="left:478px;top:100px;width:1px;height:3px;background:#808080"></div>
<div style="left:284px;top:104px;width:195px;height:1px;background:#FFFFFF"></div>
<div style="left:284px;top:105px;width:195px;height:1px;background:#D4D0C8"></div>
<div style="left:284px;top:106px;width:195px;height:1px;background:#808080"></div>
<div style="left:478px;top:104px;width:1px;height:3px;background:#808080"></div>
<div style="left:482px;top:98px;width:12px;height:12px;background:#D4D0C8;box-shadow:inset 1px 1px 0 #FFFFFF,inset -1px -1px 0 #808080;"></div>
<svg style="left:484px;top:100px;" width="8" height="8" viewBox="0 0 8 8"><path d="M1.500,2.300 L6.500,6.700 M6.500,2.300 L1.500,6.700" stroke="#000" stroke-width="1.800"/></svg>
<div style="left:496px;top:96px;width:1px;height:522px;background:#808080"></div>
<div style="left:497px;top:96px;width:1px;height:522px;background:#404040"></div>
<div style="left:283px;top:111px;width:210px;height:1px;background:#FFFFFF"></div>
<div style="left:283px;top:111px;width:1px;height:507px;background:#FFFFFF"></div>
<div style="left:492px;top:111px;width:1px;height:507px;background:#808080"></div>
<div style="left:287px;top:115px;width:202px;height:520px;background:#fff;box-shadow:inset 1px 1px 0 #808080,inset -1px -1px 0 #FFFFFF,inset 2px 2px 0 #404040,inset -2px -2px 0 #D4D0C8;"></div>
<div style="left:-1px;top:121px;width:9px;height:9px;background:#fff;border:1px solid #808080;width:7px;height:7px"></div>
<div style="left:1px;top:125px;width:5px;height:1px;background:#000"></div>
<svg style="left:15px;top:117px;" width="17" height="16" viewBox="0 0 17 16"><g stroke="#000" stroke-width="1.100" fill="#FFFF00">
<polygon points="1,12 4,9 15,9 12,12"/><polygon points="1,8.500 4,5.500 15,5.500 12,8.500"/><polygon points="1,5 4,2 15,2 12,5"/></g></svg>
<div style="left:34px;top:118px;width:42px;height:15px;background:#0A246A"></div>
<span id="t18" class="t " style="left:36px;top:120px;font-size:11px;line-height:11px;color:#fff;font-weight:bold;letter-spacing:0.567px;">Layers</span>
<div style="left:19px;top:137px;width:9px;height:9px;background:#fff;border:1px solid #808080;width:7px;height:7px"></div>
<div style="left:21px;top:141px;width:5px;height:1px;background:#000"></div>
<div style="left:35px;top:135px;width:11px;height:11px;background:#fff;border:1px solid #000;width:9px;height:9px;box-shadow:inset 1px 1px 0 #808080"></div>
<svg style="left:36px;top:136px;" width="9" height="9" viewBox="0 0 9 9"><path d="M1.500,4 L3.500,6.500 L7.500,1.500" fill="none" stroke="#000" stroke-width="2"/></svg>
<span id="t19" class="t " style="left:54px;top:136px;font-size:11px;line-height:11px;color:#000;letter-spacing:-0.068px;">Водосбор</span>
<svg style="left:51px;top:148px;" width="21" height="16" viewBox="0 0 21 16"><rect x="3" y="2.700" width="14.500" height="9.800" rx="2" fill="#fff" stroke="#700000" stroke-width="4"/></svg>
<div style="left:19px;top:169px;width:9px;height:9px;background:#fff;border:1px solid #808080;width:7px;height:7px"></div>
<div style="left:21px;top:173px;width:5px;height:1px;background:#000"></div>
<div style="left:35px;top:167px;width:11px;height:11px;background:#fff;border:1px solid #000;width:9px;height:9px;box-shadow:inset 1px 1px 0 #808080"></div>
<svg style="left:36px;top:168px;" width="9" height="9" viewBox="0 0 9 9"><path d="M1.500,4 L3.500,6.500 L7.500,1.500" fill="none" stroke="#000" stroke-width="2"/></svg>
<span id="t20" class="t " style="left:54px;top:168px;font-size:11px;line-height:11px;color:#000;letter-spacing:0.238px;">Лес</span>
<div style="left:54px;top:183px;width:15px;height:11px;background:#74B274;border:1px solid #8a8a8a;width:13px;height:9px"></div>
<div style="left:297px;top:133px;width:1px;height:441px;background:repeating-linear-gradient(to bottom,#808080 0,#808080 1px,transparent 1px,transparent 2px);background-position:0 0px"></div>
<div style="left:316px;top:149px;width:1px;height:137px;background:repeating-linear-gradient(to bottom,#808080 0,#808080 1px,transparent 1px,transparent 2px);background-position:0 1px"></div>
<div style="left:335px;top:181px;width:1px;height:57px;background:repeating-linear-gradient(to bottom,#808080 0,#808080 1px,transparent 1px,transparent 2px);background-position:0 0px"></div>
<svg style="left:290px;top:117px;" width="16" height="16" viewBox="0 0 16 16"><path d="M0.500,3 h5 l1.500,1.500 h6 v9 h-12.500 z" fill="#F8E890" stroke="#A09030" stroke-width="0.700"/><g transform="translate(4,3) scale(0.8)"><polygon points="0.200,3.900 6.300,1 16,5.900 10.400,8.300" fill="#D01010"/>
<polygon points="0.200,3.900 10.400,8.300 10.400,15.600 0.200,11.100" fill="#E60A0A"/>
<polygon points="10.400,8.300 16,5.900 16,12 10.400,15.600" fill="#960000"/>
<path d="M8.300,2.800 Q9.800,0.600 11.300,2 L12.300,4" fill="none" stroke="#300000" stroke-width="1.300"/>
<path d="M0.200,7 L10.400,11.500" stroke="#B00000" stroke-width="0.800"/>
<rect x="4.300" y="7" width="1.500" height="2.500" fill="#FFE8B0"/><rect x="6.600" y="8.300" width="1.300" height="2" fill="#fff"/>
<path d="M1.500,5.500 l1,0.400 M4,6.500 l1,0.400 M7.500,8 l1,0.400 M2,9.500 l1,0.400 M7.500,12 l1,0.400 M3.500,3.300 l1,-0.400 M7,3 l1,0.400 M11,5 l1,0.400" stroke="#FF9090" stroke-width="0.800"/>
<polygon points="0.200,3.900 6.300,1 16,5.900 16,12 10.400,15.600 0.200,11.100" fill="none" stroke="#600000" stroke-width="0.600"/></g></svg>
<span id="t21" class="t " style="left:309.5px;top:120px;font-size:11px;line-height:11px;color:#000;letter-spacing:0.033px;">ArcToolbox</span>
<div style="left:302px;top:141px;width:6px;height:1px;background:repeating-linear-gradient(to right,#808080 0,#808080 1px,transparent 1px,transparent 2px);background-position:1px 0"></div>
<svg style="left:308px;top:133px;" width="16" height="16" viewBox="0 0 16 16"><polygon points="0.200,3.900 6.300,1 16,5.900 10.400,8.300" fill="#D01010"/>
<polygon points="0.200,3.900 10.400,8.300 10.400,15.600 0.200,11.100" fill="#E60A0A"/>
<polygon points="10.400,8.300 16,5.900 16,12 10.400,15.600" fill="#960000"/>
<path d="M8.300,2.800 Q9.800,0.600 11.300,2 L12.300,4" fill="none" stroke="#300000" stroke-width="1.300"/>
<path d="M0.200,7 L10.400,11.500" stroke="#B00000" stroke-width="0.800"/>
<rect x="4.300" y="7" width="1.500" height="2.500" fill="#FFE8B0"/><rect x="6.600" y="8.300" width="1.300" height="2" fill="#fff"/>
<path d="M1.500,5.500 l1,0.400 M4,6.500 l1,0.400 M7.500,8 l1,0.400 M2,9.500 l1,0.400 M7.500,12 l1,0.400 M3.500,3.300 l1,-0.400 M7,3 l1,0.400 M11,5 l1,0.400" stroke="#FF9090" stroke-width="0.800"/>
<polygon points="0.200,3.900 6.300,1 16,5.900 16,12 10.400,15.600 0.200,11.100" fill="none" stroke="#600000" stroke-width="0.600"/></svg>
<div style="left:293px;top:137px;width:9px;height:9px;background:#fff;border:1px solid #808080;width:7px;height:7px"></div>
<div style="left:295px;top:141px;width:5px;height:1px;background:#000"></div>
<div style="left:297px;top:139px;width:1px;height:5px;background:#000"></div>
<span id="t22" class="t " style="left:328.5px;top:136px;font-size:11px;line-height:11px;color:#000;letter-spacing:-0.000px;">3D Analyst Tools</span>
<div style="left:302px;top:157px;width:6px;height:1px;background:repeating-linear-gradient(to right,#808080 0,#808080 1px,transparent 1px,transparent 2px);background-position:1px 0"></div>
<svg style="left:308px;top:149px;" width="16" height="16" viewBox="0 0 16 16"><polygon points="0.200,3.900 6.300,1 16,5.900 10.400,8.300" fill="#D01010"/>
<polygon points="0.200,3.900 10.400,8.300 10.400,15.600 0.200,11.100" fill="#E60A0A"/>
<polygon points="10.400,8.300 16,5.900 16,12 10.400,15.600" fill="#960000"/>
<path d="M8.300,2.800 Q9.800,0.600 11.300,2 L12.300,4" fill="none" stroke="#300000" stroke-width="1.300"/>
<path d="M0.200,7 L10.400,11.500" stroke="#B00000" stroke-width="0.800"/>
<rect x="4.300" y="7" width="1.500" height="2.500" fill="#FFE8B0"/><rect x="6.600" y="8.300" width="1.300" height="2" fill="#fff"/>
<path d="M1.500,5.500 l1,0.400 M4,6.500 l1,0.400 M7.500,8 l1,0.400 M2,9.500 l1,0.400 M7.500,12 l1,0.400 M3.500,3.300 l1,-0.400 M7,3 l1,0.400 M11,5 l1,0.400" stroke="#FF9090" stroke-width="0.800"/>
<polygon points="0.200,3.900 6.300,1 16,5.900 16,12 10.400,15.600 0.200,11.100" fill="none" stroke="#600000" stroke-width="0.600"/></svg>
<div style="left:293px;top:153px;width:9px;height:9px;background:#fff;border:1px solid #808080;width:7px;height:7px"></div>
<div style="left:295px;top:157px;width:5px;height:1px;background:#000"></div>
<span id="t23" class="t " style="left:328.5px;top:152px;font-size:11px;line-height:11px;color:#000;letter-spacing:-0.122px;">Analysis Tools</span>
<div style="left:321px;top:173px;width:6px;height:1px;background:repeating-linear-gradient(to right,#808080 0,#808080 1px,transparent 1px,transparent 2px);background-position:0px 0"></div>
<svg style="left:327px;top:165px;" width="16" height="16" viewBox="0 0 16 16"><polygon points="0.300,7.100 5.300,2.800 15.200,7.500 9.400,11.100" fill="#fff"/>
<polygon points="0.300,7.100 5.300,2.800 5.300,5.200 2.600,8.100" fill="#A00000"/>
<polygon points="0.300,7.100 9.400,11.100 9.400,15.600 0.500,11.300" fill="#E00808"/>
<polygon points="9.400,11.100 15.200,7.500 15.200,11.300 9.400,15.600" fill="#800000"/>
<polygon points="0.300,7.100 5.300,2.800 15.200,7.500 15.200,11.300 9.400,15.600 0.500,11.300" fill="none" stroke="#300000" stroke-width="0.800"/>
<path d="M0.300,7.100 L9.400,11.100 L15.200,7.500" fill="none" stroke="#300000" stroke-width="0.700"/>
<path d="M3.200,2.600 L11,9.200" stroke="#5A2A10" stroke-width="2.300"/>
<path d="M3.200,2.600 L11,9.200" stroke="#C08850" stroke-width="1.100"/>
<path d="M1,3.400 L5,0.800" stroke="#1c1c1c" stroke-width="2.200"/></svg>
<div style="left:312px;top:169px;width:9px;height:9px;background:#fff;border:1px solid #808080;width:7px;height:7px"></div>
<div style="left:314px;top:173px;width:5px;height:1px;background:#000"></div>
<span id="t24" class="t " style="left:347.5px;top:168px;font-size:11px;line-height:11px;color:#000;letter-spacing:0.281px;">Extract</span>
<div style="left:335px;top:189px;width:11px;height:1px;background:repeating-linear-gradient(to right,#808080 0,#808080 1px,transparent 1px,transparent 2px);background-position:0px 0"></div>
<svg style="left:346px;top:181px;" width="17" height="16" viewBox="0 0 17 16"><path d="M1.500,14.500 L10,5.500" stroke="#3A2A08" stroke-width="3.200"/>
<path d="M1.500,14.500 L10,5.500" stroke="#A88030" stroke-width="1.700"/>
<path d="M6.500,3.800 Q8.500,0.800 11.500,2.200 L15.200,6 L13.200,7.800 L10.800,5.200 L9.500,4.200" fill="#A8A0B8" stroke="#202020" stroke-width="0.900"/>
<path d="M11.500,3 L14,5.500" stroke="#fff" stroke-width="0.900" fill="none"/></svg>
<div style="left:365px;top:181px;width:21px;height:16px;background:#D4D0C8"></div>
<span id="t25" class="t " style="left:366.5px;top:184px;font-size:11px;line-height:11px;color:#000;letter-spacing:-0.444px;">Clip</span>
<div style="left:335px;top:205px;width:11px;height:1px;background:repeating-linear-gradient(to right,#808080 0,#808080 1px,transparent 1px,transparent 2px);background-position:0px 0"></div>
<svg style="left:346px;top:197px;" width="17" height="16" viewBox="0 0 17 16"><path d="M1.500,14.500 L10,5.500" stroke="#3A2A08" stroke-width="3.200"/>
<path d="M1.500,14.500 L10,5.500" stroke="#A88030" stroke-width="1.700"/>
<path d="M6.500,3.800 Q8.500,0.800 11.500,2.200 L15.200,6 L13.200,7.800 L10.800,5.200 L9.500,4.200" fill="#A8A0B8" stroke="#202020" stroke-width="0.900"/>
<path d="M11.500,3 L14,5.500" stroke="#fff" stroke-width="0.900" fill="none"/></svg>
<span id="t26" class="t " style="left:366.5px;top:200px;font-size:11px;line-height:11px;color:#000;letter-spacing:-0.212px;">Select</span>
<div style="left:335px;top:221px;width:11px;height:1px;background:repeating-linear-gradient(to right,#808080 0,#808080 1px,transparent 1px,transparent 2px);background-position:0px 0"></div>
<svg style="left:346px;top:213px;" width="17" height="16" viewBox="0 0 17 16"><path d="M1.500,14.500 L10,5.500" stroke="#3A2A08" stroke-width="3.200"/>
<path d="M1.500,14.500 L10,5.500" stroke="#A88030" stroke-width="1.700"/>
<path d="M6.500,3.800 Q8.500,0.800 11.500,2.200 L15.200,6 L13.200,7.800 L10.800,5.200 L9.500,4.200" fill="#A8A0B8" stroke="#202020" stroke-width="0.900"/>
<path d="M11.500,3 L14,5.500" stroke="#fff" stroke-width="0.900" fill="none"/></svg>
<span id="t27" class="t " style="left:366.5px;top:216px;font-size:11px;line-height:11px;color:#000;letter-spacing:-0.097px;">Split</span>
<div style="left:335px;top:237px;width:11px;height:1px;background:repeating-linear-gradient(to right,#808080 0,#808080 1px,transparent 1px,transparent 2px);background-position:0px 0"></div>
<svg style="left:346px;top:229px;" width="17" height="16" viewBox="0 0 17 16"><path d="M1.500,14.500 L10,5.500" stroke="#3A2A08" stroke-width="3.200"/>
<path d="M1.500,14.500 L10,5.500" stroke="#A88030" stroke-width="1.700"/>
<path d="M6.500,3.800 Q8.500,0.800 11.500,2.200 L15.200,6 L13.200,7.800 L10.800,5.200 L9.500,4.200" fill="#A8A0B8" stroke="#202020" stroke-width="0.900"/>
<path d="M11.500,3 L14,5.500" stroke="#fff" stroke-width="0.900" fill="none"/></svg>
<span id="t28" class="t " style="left:366.5px;top:232px;font-size:11px;line-height:11px;color:#000;letter-spacing:-0.147px;">Table Select</span>
<div style="left:321px;top:253px;width:6px;height:1px;background:repeating-linear-gradient(to right,#808080 0,#808080 1px,transparent 1px,transparent 2px);background-position:0px 0"></div>
<svg style="left:327px;top:245px;" width="16" height="16" viewBox="0 0 16 16"><polygon points="0.300,7.100 5.300,2.800 15.200,7.500 9.400,11.100" fill="#fff"/>
<polygon points="0.300,7.100 5.300,2.800 5.300,5.200 2.600,8.100" fill="#A00000"/>
<polygon points="0.300,7.100 9.400,11.100 9.400,15.600 0.500,11.300" fill="#E00808"/>
<polygon points="9.400,11.100 15.200,7.500 15.200,11.300 9.400,15.600" fill="#800000"/>
<polygon points="0.300,7.100 5.300,2.800 15.200,7.500 15.200,11.300 9.400,15.600 0.500,11.300" fill="none" stroke="#300000" stroke-width="0.800"/>
<path d="M0.300,7.100 L9.400,11.100 L15.200,7.500" fill="none" stroke="#300000" stroke-width="0.700"/>
<path d="M3.200,2.600 L11,9.200" stroke="#5A2A10" stroke-width="2.300"/>
<path d="M3.200,2.600 L11,9.200" stroke="#C08850" stroke-width="1.100"/>
<path d="M1,3.400 L5,0.800" stroke="#1c1c1c" stroke-width="2.200"/></svg>
<div style="left:312px;top:249px;width:9px;height:9px;background:#fff;border:1px solid #808080;width:7px;height:7px"></div>
<div style="left:314px;top:253px;width:5px;height:1px;background:#000"></div>
<div style="left:316px;top:251px;width:1px;height:5px;background:#000"></div>
<span id="t29" class="t " style="left:347.5px;top:248px;font-size:11px;line-height:11px;color:#000;letter-spacing:0.136px;">Overlay</span>
<div style="left:321px;top:269px;width:6px;height:1px;background:repeating-linear-gradient(to right,#808080 0,#808080 1px,transparent 1px,transparent 2px);background-position:0px 0"></div>
<svg style="left:327px;top:261px;" width="16" height="16" viewBox="0 0 16 16"><polygon points="0.300,7.100 5.300,2.800 15.200,7.500 9.400,11.100" fill="#fff"/>
<polygon points="0.300,7.100 5.300,2.800 5.300,5.200 2.600,8.100" fill="#A00000"/>
<polygon points="0.300,7.100 9.400,11.100 9.400,15.600 0.500,11.300" fill="#E00808"/>
<polygon points="9.400,11.100 15.200,7.500 15.200,11.300 9.400,15.600" fill="#800000"/>
<polygon points="0.300,7.100 5.300,2.800 15.200,7.500 15.200,11.300 9.400,15.600 0.500,11.300" fill="none" stroke="#300000" stroke-width="0.800"/>
<path d="M0.300,7.100 L9.400,11.100 L15.200,7.500" fill="none" stroke="#300000" stroke-width="0.700"/>
<path d="M3.200,2.600 L11,9.200" stroke="#5A2A10" stroke-width="2.300"/>
<path d="M3.200,2.600 L11,9.200" stroke="#C08850" stroke-width="1.100"/>
<path d="M1,3.400 L5,0.800" stroke="#1c1c1c" stroke-width="2.200"/></svg>
<div style="left:312px;top:265px;width:9px;height:9px;background:#fff;border:1px solid #808080;width:7px;height:7px"></div>
<div style="left:314px;top:269px;width:5px;height:1px;background:#000"></div>
<div style="left:316px;top:267px;width:1px;height:5px;background:#000"></div>
<span id="t30" class="t " style="left:347.5px;top:264px;font-size:11px;line-height:11px;color:#000;letter-spacing:-0.102px;">Proximity</span>
<div style="left:321px;top:285px;width:6px;height:1px;background:repeating-linear-gradient(to right,#808080 0,#808080 1px,transparent 1px,transparent 2px);background-position:0px 0"></div>
<svg style="left:327px;top:277px;" width="16" height="16" viewBox="0 0 16 16"><polygon points="0.300,7.100 5.300,2.800 15.200,7.500 9.400,11.100" fill="#fff"/>
<polygon points="0.300,7.100 5.300,2.800 5.300,5.200 2.600,8.100" fill="#A00000"/>
<polygon points="0.300,7.100 9.400,11.100 9.400,15.600 0.500,11.300" fill="#E00808"/>
<polygon points="9.400,11.100 15.200,7.500 15.200,11.300 9.400,15.600" fill="#800000"/>
<polygon points="0.300,7.100 5.300,2.800 15.200,7.500 15.200,11.300 9.400,15.600 0.500,11.300" fill="none" stroke="#300000" stroke-width="0.800"/>
<path d="M0.300,7.100 L9.400,11.100 L15.200,7.500" fill="none" stroke="#300000" stroke-width="0.700"/>
<path d="M3.200,2.600 L11,9.200" stroke="#5A2A10" stroke-width="2.300"/>
<path d="M3.200,2.600 L11,9.200" stroke="#C08850" stroke-width="1.100"/>
<path d="M1,3.400 L5,0.800" stroke="#1c1c1c" stroke-width="2.200"/></svg>
<div style="left:312px;top:281px;width:9px;height:9px;background:#fff;border:1px solid #808080;width:7px;height:7px"></div>
<div style="left:314px;top:285px;width:5px;height:1px;background:#000"></div>
<div style="left:316px;top:283px;width:1px;height:5px;background:#000"></div>
<span id="t31" class="t " style="left:347.5px;top:280px;font-size:11px;line-height:11px;color:#000;letter-spacing:-0.022px;">Statistics</span>
<div style="left:302px;top:301px;width:6px;height:1px;background:repeating-linear-gradient(to right,#808080 0,#808080 1px,transparent 1px,transparent 2px);background-position:1px 0"></div>
<svg style="left:308px;top:293px;" width="16" height="16" viewBox="0 0 16 16"><polygon points="0.200,3.900 6.300,1 16,5.900 10.400,8.300" fill="#D01010"/>
<polygon points="0.200,3.900 10.400,8.300 10.400,15.600 0.200,11.100" fill="#E60A0A"/>
<polygon points="10.400,8.300 16,5.900 16,12 10.400,15.600" fill="#960000"/>
<path d="M8.300,2.800 Q9.800,0.600 11.300,2 L12.300,4" fill="none" stroke="#300000" stroke-width="1.300"/>
<path d="M0.200,7 L10.400,11.500" stroke="#B00000" stroke-width="0.800"/>
<rect x="4.300" y="7" width="1.500" height="2.500" fill="#FFE8B0"/><rect x="6.600" y="8.300" width="1.300" height="2" fill="#fff"/>
<path d="M1.500,5.500 l1,0.400 M4,6.500 l1,0.400 M7.500,8 l1,0.400 M2,9.500 l1,0.400 M7.500,12 l1,0.400 M3.500,3.300 l1,-0.400 M7,3 l1,0.400 M11,5 l1,0.400" stroke="#FF9090" stroke-width="0.800"/>
<polygon points="0.200,3.900 6.300,1 16,5.900 16,12 10.400,15.600 0.200,11.100" fill="none" stroke="#600000" stroke-width="0.600"/></svg>
<div style="left:293px;top:297px;width:9px;height:9px;background:#fff;border:1px solid #808080;width:7px;height:7px"></div>
<div style="left:295px;top:301px;width:5px;height:1px;background:#000"></div>
<div style="left:297px;top:299px;width:1px;height:5px;background:#000"></div>
<span id="t32" class="t " style="left:328.5px;top:296px;font-size:11px;line-height:11px;color:#000;letter-spacing:0.059px;">Cartography Tools</span>
<div style="left:302px;top:317px;width:6px;height:1px;background:repeating-linear-gradient(to right,#808080 0,#808080 1px,transparent 1px,transparent 2px);background-position:1px 0"></div>
<svg style="left:308px;top:309px;" width="16" height="16" viewBox="0 0 16 16"><polygon points="0.200,3.900 6.300,1 16,5.900 10.400,8.300" fill="#D01010"/>
<polygon points="0.200,3.900 10.400,8.300 10.400,15.600 0.200,11.100" fill="#E60A0A"/>
<polygon points="10.400,8.300 16,5.900 16,12 10.400,15.600" fill="#960000"/>
<path d="M8.300,2.800 Q9.800,0.600 11.300,2 L12.300,4" fill="none" stroke="#300000" stroke-width="1.300"/>
<path d="M0.200,7 L10.400,11.500" stroke="#B00000" stroke-width="0.800"/>
<rect x="4.300" y="7" width="1.500" height="2.500" fill="#FFE8B0"/><rect x="6.600" y="8.300" width="1.300" height="2" fill="#fff"/>
<path d="M1.500,5.500 l1,0.400 M4,6.500 l1,0.400 M7.500,8 l1,0.400 M2,9.500 l1,0.400 M7.500,12 l1,0.400 M3.500,3.300 l1,-0.400 M7,3 l1,0.400 M11,5 l1,0.400" stroke="#FF9090" stroke-width="0.800"/>
<polygon points="0.200,3.900 6.300,1 16,5.900 16,12 10.400,15.600 0.200,11.100" fill="none" stroke="#600000" stroke-width="0.600"/></svg>
<div style="left:293px;top:313px;width:9px;height:9px;background:#fff;border:1px solid #808080;width:7px;height:7px"></div>
<div style="left:295px;top:317px;width:5px;height:1px;background:#000"></div>
<div style="left:297px;top:315px;width:1px;height:5px;background:#000"></div>
<span id="t33" class="t " style="left:328.5px;top:312px;font-size:11px;line-height:11px;color:#000;letter-spacing:-0.078px;">Conversion Tools</span>
<div style="left:302px;top:333px;width:6px;height:1px;background:repeating-linear-gradient(to right,#808080 0,#808080 1px,transparent 1px,transparent 2px);background-position:1px 0"></div>
<svg style="left:308px;top:325px;" width="16" height="16" viewBox="0 0 16 16"><polygon points="0.200,3.900 6.300,1 16,5.900 10.400,8.300" fill="#D01010"/>
<polygon points="0.200,3.900 10.400,8.300 10.400,15.600 0.200,11.100" fill="#E60A0A"/>
<polygon points="10.400,8.300 16,5.900 16,12 10.400,15.600" fill="#960000"/>
<path d="M8.300,2.800 Q9.800,0.600 11.300,2 L12.300,4" fill="none" stroke="#300000" stroke-width="1.300"/>
<path d="M0.200,7 L10.400,11.500" stroke="#B00000" stroke-width="0.800"/>
<rect x="4.300" y="7" width="1.500" height="2.500" fill="#FFE8B0"/><rect x="6.600" y="8.300" width="1.300" height="2" fill="#fff"/>
<path d="M1.500,5.500 l1,0.400 M4,6.500 l1,0.400 M7.500,8 l1,0.400 M2,9.500 l1,0.400 M7.500,12 l1,0.400 M3.500,3.300 l1,-0.400 M7,3 l1,0.400 M11,5 l1,0.400" stroke="#FF9090" stroke-width="0.800"/>
<polygon points="0.200,3.900 6.300,1 16,5.900 16,12 10.400,15.600 0.200,11.100" fill="none" stroke="#600000" stroke-width="0.600"/></svg>
<div style="left:293px;top:329px;width:9px;height:9px;background:#fff;border:1px solid #808080;width:7px;height:7px"></div>
<div style="left:295px;top:333px;width:5px;height:1px;background:#000"></div>
<div style="left:297px;top:331px;width:1px;height:5px;background:#000"></div>
<span id="t34" class="t " style="left:328.5px;top:328px;font-size:11px;line-height:11px;color:#000;letter-spacing:0.074px;">Data Interoperability Tools</span>
<div style="left:302px;top:349px;width:6px;height:1px;background:repeating-linear-gradient(to right,#808080 0,#808080 1px,transparent 1px,transparent 2px);background-position:1px 0"></div>
<svg style="left:308px;top:341px;" width="16" height="16" viewBox="0 0 16 16"><polygon points="0.200,3.900 6.300,1 16,5.900 10.400,8.300" fill="#D01010"/>
<polygon points="0.200,3.900 10.400,8.300 10.400,15.600 0.200,11.100" fill="#E60A0A"/>
<polygon points="10.400,8.300 16,5.900 16,12 10.400,15.600" fill="#960000"/>
<path d="M8.300,2.800 Q9.800,0.600 11.300,2 L12.300,4" fill="none" stroke="#300000" stroke-width="1.300"/>
<path d="M0.200,7 L10.400,11.500" stroke="#B00000" stroke-width="0.800"/>
<rect x="4.300" y="7" width="1.500" height="2.500" fill="#FFE8B0"/><rect x="6.600" y="8.300" width="1.300" height="2" fill="#fff"/>
<path d="M1.500,5.500 l1,0.400 M4,6.500 l1,0.400 M7.500,8 l1,0.400 M2,9.500 l1,0.400 M7.500,12 l1,0.400 M3.500,3.300 l1,-0.400 M7,3 l1,0.400 M11,5 l1,0.400" stroke="#FF9090" stroke-width="0.800"/>
<polygon points="0.200,3.900 6.300,1 16,5.900 16,12 10.400,15.600 0.200,11.100" fill="none" stroke="#600000" stroke-width="0.600"/></svg>
<div style="left:293px;top:345px;width:9px;height:9px;background:#fff;border:1px solid #808080;width:7px;height:7px"></div>
<div style="left:295px;top:349px;width:5px;height:1px;background:#000"></div>
<div style="left:297px;top:347px;width:1px;height:5px;background:#000"></div>
<span id="t35" class="t " style="left:328.5px;top:344px;font-size:11px;line-height:11px;color:#000;letter-spacing:-0.101px;">Data Management Tools</span>
<div style="left:302px;top:365px;width:6px;height:1px;background:repeating-linear-gradient(to right,#808080 0,#808080 1px,transparent 1px,transparent 2px);background-position:1px 0"></div>
<svg style="left:308px;top:357px;" width="16" height="16" viewBox="0 0 16 16"><polygon points="0.200,3.900 6.300,1 16,5.900 10.400,8.300" fill="#D01010"/>
<polygon points="0.200,3.900 10.400,8.300 10.400,15.600 0.200,11.100" fill="#E60A0A"/>
<polygon points="10.400,8.300 16,5.900 16,12 10.400,15.600" fill="#960000"/>
<path d="M8.300,2.800 Q9.800,0.600 11.300,2 L12.300,4" fill="none" stroke="#300000" stroke-width="1.300"/>
<path d="M0.200,7 L10.400,11.500" stroke="#B00000" stroke-width="0.800"/>
<rect x="4.300" y="7" width="1.500" height="2.500" fill="#FFE8B0"/><rect x="6.600" y="8.300" width="1.300" height="2" fill="#fff"/>
<path d="M1.500,5.500 l1,0.400 M4,6.500 l1,0.400 M7.500,8 l1,0.400 M2,9.500 l1,0.400 M7.500,12 l1,0.400 M3.500,3.300 l1,-0.400 M7,3 l1,0.400 M11,5 l1,0.400" stroke="#FF9090" stroke-width="0.800"/>
<polygon points="0.200,3.900 6.300,1 16,5.900 16,12 10.400,15.600 0.200,11.100" fill="none" stroke="#600000" stroke-width="0.600"/></svg>
<div style="left:293px;top:361px;width:9px;height:9px;background:#fff;border:1px solid #808080;width:7px;height:7px"></div>
<div style="left:295px;top:365px;width:5px;height:1px;background:#000"></div>
<div style="left:297px;top:363px;width:1px;height:5px;background:#000"></div>
<span id="t36" class="t " style="left:328.5px;top:360px;font-size:11px;line-height:11px;color:#000;letter-spacing:-0.255px;">ERDAS Image Analysis Tools</span>
<div style="left:302px;top:381px;width:6px;height:1px;background:repeating-linear-gradient(to right,#808080 0,#808080 1px,transparent 1px,transparent 2px);background-position:1px 0"></div>
<svg style="left:308px;top:373px;" width="16" height="16" viewBox="0 0 16 16"><polygon points="0.200,3.900 6.300,1 16,5.900 10.400,8.300" fill="#D01010"/>
<polygon points="0.200,3.900 10.400,8.300 10.400,15.600 0.200,11.100" fill="#E60A0A"/>
<polygon points="10.400,8.300 16,5.900 16,12 10.400,15.600" fill="#960000"/>
<path d="M8.300,2.800 Q9.800,0.600 11.300,2 L12.300,4" fill="none" stroke="#300000" stroke-width="1.300"/>
<path d="M0.200,7 L10.400,11.500" stroke="#B00000" stroke-width="0.800"/>
<rect x="4.300" y="7" width="1.500" height="2.500" fill="#FFE8B0"/><rect x="6.600" y="8.300" width="1.300" height="2" fill="#fff"/>
<path d="M1.500,5.500 l1,0.400 M4,6.500 l1,0.400 M7.500,8 l1,0.400 M2,9.500 l1,0.400 M7.500,12 l1,0.400 M3.500,3.300 l1,-0.400 M7,3 l1,0.400 M11,5 l1,0.400" stroke="#FF9090" stroke-width="0.800"/>
<polygon points="0.200,3.900 6.300,1 16,5.900 16,12 10.400,15.600 0.200,11.100" fill="none" stroke="#600000" stroke-width="0.600"/></svg>
<div style="left:293px;top:377px;width:9px;height:9px;background:#fff;border:1px solid #808080;width:7px;height:7px"></div>
<div style="left:295px;top:381px;width:5px;height:1px;background:#000"></div>
<div style="left:297px;top:379px;width:1px;height:5px;background:#000"></div>
<span id="t37" class="t " style="left:328.5px;top:376px;font-size:11px;line-height:11px;color:#000;letter-spacing:-0.134px;">ERDAS Import-Export Tools</span>
<div style="left:302px;top:397px;width:6px;height:1px;background:repeating-linear-gradient(to right,#808080 0,#808080 1px,transparent 1px,transparent 2px);background-position:1px 0"></div>
<svg style="left:308px;top:389px;" width="16" height="16" viewBox="0 0 16 16"><polygon points="0.200,3.900 6.300,1 16,5.900 10.400,8.300" fill="#D01010"/>
<polygon points="0.200,3.900 10.400,8.300 10.400,15.600 0.200,11.100" fill="#E60A0A"/>
<polygon points="10.400,8.300 16,5.900 16,12 10.400,15.600" fill="#960000"/>
<path d="M8.300,2.800 Q9.800,0.600 11.300,2 L12.300,4" fill="none" stroke="#300000" stroke-width="1.300"/>
<path d="M0.200,7 L10.400,11.500" stroke="#B00000" stroke-width="0.800"/>
<rect x="4.300" y="7" width="1.500" height="2.500" fill="#FFE8B0"/><rect x="6.600" y="8.300" width="1.300" height="2" fill="#fff"/>
<path d="M1.500,5.500 l1,0.400 M4,6.500 l1,0.400 M7.500,8 l1,0.400 M2,9.500 l1,0.400 M7.500,12 l1,0.400 M3.500,3.300 l1,-0.400 M7,3 l1,0.400 M11,5 l1,0.400" stroke="#FF9090" stroke-width="0.800"/>
<polygon points="0.200,3.900 6.300,1 16,5.900 16,12 10.400,15.600 0.200,11.100" fill="none" stroke="#600000" stroke-width="0.600"/></svg>
<div style="left:293px;top:393px;width:9px;height:9px;background:#fff;border:1px solid #808080;width:7px;height:7px"></div>
<div style="left:295px;top:397px;width:5px;height:1px;background:#000"></div>
<div style="left:297px;top:395px;width:1px;height:5px;background:#000"></div>
<span id="t38" class="t " style="left:328.5px;top:392px;font-size:11px;line-height:11px;color:#000;letter-spacing:-0.209px;">Geocoding Tools</span>
<div style="left:302px;top:413px;width:6px;height:1px;background:repeating-linear-gradient(to right,#808080 0,#808080 1px,transparent 1px,transparent 2px);background-position:1px 0"></div>
<svg style="left:308px;top:405px;" width="16" height="16" viewBox="0 0 16 16"><polygon points="0.200,3.900 6.300,1 16,5.900 10.400,8.300" fill="#D01010"/>
<polygon points="0.200,3.900 10.400,8.300 10.400,15.600 0.200,11.100" fill="#E60A0A"/>
<polygon points="10.400,8.300 16,5.900 16,12 10.400,15.600" fill="#960000"/>
<path d="M8.300,2.800 Q9.800,0.600 11.300,2 L12.300,4" fill="none" stroke="#300000" stroke-width="1.300"/>
<path d="M0.200,7 L10.400,11.500" stroke="#B00000" stroke-width="0.800"/>
<rect x="4.300" y="7" width="1.500" height="2.500" fill="#FFE8B0"/><rect x="6.600" y="8.300" width="1.300" height="2" fill="#fff"/>
<path d="M1.500,5.500 l1,0.400 M4,6.500 l1,0.400 M7.500,8 l1,0.400 M2,9.500 l1,0.400 M7.500,12 l1,0.400 M3.500,3.300 l1,-0.400 M7,3 l1,0.400 M11,5 l1,0.400" stroke="#FF9090" stroke-width="0.800"/>
<polygon points="0.200,3.900 6.300,1 16,5.900 16,12 10.400,15.600 0.200,11.100" fill="none" stroke="#600000" stroke-width="0.600"/></svg>
<div style="left:293px;top:409px;width:9px;height:9px;background:#fff;border:1px solid #808080;width:7px;height:7px"></div>
<div style="left:295px;top:413px;width:5px;height:1px;background:#000"></div>
<div style="left:297px;top:411px;width:1px;height:5px;background:#000"></div>
<span id="t39" class="t " style="left:328.5px;top:408px;font-size:11px;line-height:11px;color:#000;letter-spacing:-0.043px;">Geostatistical Analyst Tools</span>
<div style="left:302px;top:429px;width:6px;height:1px;background:repeating-linear-gradient(to right,#808080 0,#808080 1px,transparent 1px,transparent 2px);background-position:1px 0"></div>
<svg style="left:308px;top:421px;" width="16" height="16" viewBox="0 0 16 16"><polygon points="0.200,3.900 6.300,1 16,5.900 10.400,8.300" fill="#D01010"/>
<polygon points="0.200,3.900 10.400,8.300 10.400,15.600 0.200,11.100" fill="#E60A0A"/>
<polygon points="10.400,8.300 16,5.900 16,12 10.400,15.600" fill="#960000"/>
<path d="M8.300,2.800 Q9.800,0.600 11.300,2 L12.300,4" fill="none" stroke="#300000" stroke-width="1.300"/>
<path d="M0.200,7 L10.400,11.500" stroke="#B00000" stroke-width="0.800"/>
<rect x="4.300" y="7" width="1.500" height="2.500" fill="#FFE8B0"/><rect x="6.600" y="8.300" width="1.300" height="2" fill="#fff"/>
<path d="M1.500,5.500 l1,0.400 M4,6.500 l1,0.400 M7.500,8 l1,0.400 M2,9.500 l1,0.400 M7.500,12 l1,0.400 M3.500,3.300 l1,-0.400 M7,3 l1,0.400 M11,5 l1,0.400" stroke="#FF9090" stroke-width="0.800"/>
<polygon points="0.200,3.900 6.300,1 16,5.900 16,12 10.400,15.600 0.200,11.100" fill="none" stroke="#600000" stroke-width="0.600"/></svg>
<div style="left:293px;top:425px;width:9px;height:9px;background:#fff;border:1px solid #808080;width:7px;height:7px"></div>
<div style="left:295px;top:429px;width:5px;height:1px;background:#000"></div>
<div style="left:297px;top:427px;width:1px;height:5px;background:#000"></div>
<span id="t40" class="t " style="left:328.5px;top:424px;font-size:11px;line-height:11px;color:#000;letter-spacing:-0.111px;">Linear Referencing Tools</span>
<div style="left:302px;top:445px;width:6px;height:1px;background:repeating-linear-gradient(to right,#808080 0,#808080 1px,transparent 1px,transparent 2px);background-position:1px 0"></div>
<svg style="left:308px;top:437px;" width="16" height="16" viewBox="0 0 16 16"><polygon points="0.200,3.900 6.300,1 16,5.900 10.400,8.300" fill="#D01010"/>
<polygon points="0.200,3.900 10.400,8.300 10.400,15.600 0.200,11.100" fill="#E60A0A"/>
<polygon points="10.400,8.300 16,5.900 16,12 10.400,15.600" fill="#960000"/>
<path d="M8.300,2.800 Q9.800,0.600 11.300,2 L12.300,4" fill="none" stroke="#300000" stroke-width="1.300"/>
<path d="M0.200,7 L10.400,11.500" stroke="#B00000" stroke-width="0.800"/>
<rect x="4.300" y="7" width="1.500" height="2.500" fill="#FFE8B0"/><rect x="6.600" y="8.300" width="1.300" height="2" fill="#fff"/>
<path d="M1.500,5.500 l1,0.400 M4,6.500 l1,0.400 M7.500,8 l1,0.400 M2,9.500 l1,0.400 M7.500,12 l1,0.400 M3.500,3.300 l1,-0.400 M7,3 l1,0.400 M11,5 l1,0.400" stroke="#FF9090" stroke-width="0.800"/>
<polygon points="0.200,3.900 6.300,1 16,5.900 16,12 10.400,15.600 0.200,11.100" fill="none" stroke="#600000" stroke-width="0.600"/></svg>
<div style="left:293px;top:441px;width:9px;height:9px;background:#fff;border:1px solid #808080;width:7px;height:7px"></div>
<div style="left:295px;top:445px;width:5px;height:1px;background:#000"></div>
<div style="left:297px;top:443px;width:1px;height:5px;background:#000"></div>
<span id="t41" class="t " style="left:328.5px;top:440px;font-size:11px;line-height:11px;color:#000;letter-spacing:-0.167px;">Mobile Tools</span>
<div style="left:302px;top:461px;width:6px;height:1px;background:repeating-linear-gradient(to right,#808080 0,#808080 1px,transparent 1px,transparent 2px);background-position:1px 0"></div>
<svg style="left:308px;top:453px;" width="16" height="16" viewBox="0 0 16 16"><polygon points="0.200,3.900 6.300,1 16,5.900 10.400,8.300" fill="#D01010"/>
<polygon points="0.200,3.900 10.400,8.300 10.400,15.600 0.200,11.100" fill="#E60A0A"/>
<polygon points="10.400,8.300 16,5.900 16,12 10.400,15.600" fill="#960000"/>
<path d="M8.300,2.800 Q9.800,0.600 11.300,2 L12.300,4" fill="none" stroke="#300000" stroke-width="1.300"/>
<path d="M0.200,7 L10.400,11.500" stroke="#B00000" stroke-width="0.800"/>
<rect x="4.300" y="7" width="1.500" height="2.500" fill="#FFE8B0"/><rect x="6.600" y="8.300" width="1.300" height="2" fill="#fff"/>
<path d="M1.500,5.500 l1,0.400 M4,6.500 l1,0.400 M7.500,8 l1,0.400 M2,9.500 l1,0.400 M7.500,12 l1,0.400 M3.500,3.300 l1,-0.400 M7,3 l1,0.400 M11,5 l1,0.400" stroke="#FF9090" stroke-width="0.800"/>
<polygon points="0.200,3.900 6.300,1 16,5.900 16,12 10.400,15.600 0.200,11.100" fill="none" stroke="#600000" stroke-width="0.600"/></svg>
<div style="left:293px;top:457px;width:9px;height:9px;background:#fff;border:1px solid #808080;width:7px;height:7px"></div>
<div style="left:295px;top:461px;width:5px;height:1px;background:#000"></div>
<div style="left:297px;top:459px;width:1px;height:5px;background:#000"></div>
<span id="t42" class="t " style="left:328.5px;top:456px;font-size:11px;line-height:11px;color:#000;letter-spacing:-0.210px;">Multidimension Tools</span>
<div style="left:302px;top:477px;width:6px;height:1px;background:repeating-linear-gradient(to right,#808080 0,#808080 1px,transparent 1px,transparent 2px);background-position:1px 0"></div>
<svg style="left:308px;top:469px;" width="16" height="16" viewBox="0 0 16 16"><polygon points="0.200,3.900 6.300,1 16,5.900 10.400,8.300" fill="#D01010"/>
<polygon points="0.200,3.900 10.400,8.300 10.400,15.600 0.200,11.100" fill="#E60A0A"/>
<polygon points="10.400,8.300 16,5.900 16,12 10.400,15.600" fill="#960000"/>
<path d="M8.300,2.800 Q9.800,0.600 11.300,2 L12.300,4" fill="none" stroke="#300000" stroke-width="1.300"/>
<path d="M0.200,7 L10.400,11.500" stroke="#B00000" stroke-width="0.800"/>
<rect x="4.300" y="7" width="1.500" height="2.500" fill="#FFE8B0"/><rect x="6.600" y="8.300" width="1.300" height="2" fill="#fff"/>
<path d="M1.500,5.500 l1,0.400 M4,6.500 l1,0.400 M7.500,8 l1,0.400 M2,9.500 l1,0.400 M7.500,12 l1,0.400 M3.500,3.300 l1,-0.400 M7,3 l1,0.400 M11,5 l1,0.400" stroke="#FF9090" stroke-width="0.800"/>
<polygon points="0.200,3.900 6.300,1 16,5.900 16,12 10.400,15.600 0.200,11.100" fill="none" stroke="#600000" stroke-width="0.600"/></svg>
<div style="left:293px;top:473px;width:9px;height:9px;background:#fff;border:1px solid #808080;width:7px;height:7px"></div>
<div style="left:295px;top:477px;width:5px;height:1px;background:#000"></div>
<div style="left:297px;top:475px;width:1px;height:5px;background:#000"></div>
<span id="t43" class="t " style="left:328.5px;top:472px;font-size:11px;line-height:11px;color:#000;letter-spacing:0.016px;">Network Analyst Tools</span>
<div style="left:302px;top:493px;width:6px;height:1px;background:repeating-linear-gradient(to right,#808080 0,#808080 1px,transparent 1px,transparent 2px);background-position:1px 0"></div>
<svg style="left:308px;top:485px;" width="16" height="16" viewBox="0 0 16 16"><polygon points="0.200,3.900 6.300,1 16,5.900 10.400,8.300" fill="#D01010"/>
<polygon points="0.200,3.900 10.400,8.300 10.400,15.600 0.200,11.100" fill="#E60A0A"/>
<polygon points="10.400,8.300 16,5.900 16,12 10.400,15.600" fill="#960000"/>
<path d="M8.300,2.800 Q9.800,0.600 11.300,2 L12.300,4" fill="none" stroke="#300000" stroke-width="1.300"/>
<path d="M0.200,7 L10.400,11.500" stroke="#B00000" stroke-width="0.800"/>
<rect x="4.300" y="7" width="1.500" height="2.500" fill="#FFE8B0"/><rect x="6.600" y="8.300" width="1.300" height="2" fill="#fff"/>
<path d="M1.500,5.500 l1,0.400 M4,6.500 l1,0.400 M7.500,8 l1,0.400 M2,9.500 l1,0.400 M7.500,12 l1,0.400 M3.500,3.300 l1,-0.400 M7,3 l1,0.400 M11,5 l1,0.400" stroke="#FF9090" stroke-width="0.800"/>
<polygon points="0.200,3.900 6.300,1 16,5.900 16,12 10.400,15.600 0.200,11.100" fill="none" stroke="#600000" stroke-width="0.600"/></svg>
<div style="left:293px;top:489px;width:9px;height:9px;background:#fff;border:1px solid #808080;width:7px;height:7px"></div>
<div style="left:295px;top:493px;width:5px;height:1px;background:#000"></div>
<div style="left:297px;top:491px;width:1px;height:5px;background:#000"></div>
<span id="t44" class="t " style="left:328.5px;top:488px;font-size:11px;line-height:11px;color:#000;letter-spacing:-0.463px;">Samples</span>
<div style="left:302px;top:509px;width:6px;height:1px;background:repeating-linear-gradient(to right,#808080 0,#808080 1px,transparent 1px,transparent 2px);background-position:1px 0"></div>
<svg style="left:308px;top:501px;" width="16" height="16" viewBox="0 0 16 16"><polygon points="0.200,3.900 6.300,1 16,5.900 10.400,8.300" fill="#D01010"/>
<polygon points="0.200,3.900 10.400,8.300 10.400,15.600 0.200,11.100" fill="#E60A0A"/>
<polygon points="10.400,8.300 16,5.900 16,12 10.400,15.600" fill="#960000"/>
<path d="M8.300,2.800 Q9.800,0.600 11.300,2 L12.300,4" fill="none" stroke="#300000" stroke-width="1.300"/>
<path d="M0.200,7 L10.400,11.500" stroke="#B00000" stroke-width="0.800"/>
<rect x="4.300" y="7" width="1.500" height="2.500" fill="#FFE8B0"/><rect x="6.600" y="8.300" width="1.300" height="2" fill="#fff"/>
<path d="M1.500,5.500 l1,0.400 M4,6.500 l1,0.400 M7.500,8 l1,0.400 M2,9.500 l1,0.400 M7.500,12 l1,0.400 M3.500,3.300 l1,-0.400 M7,3 l1,0.400 M11,5 l1,0.400" stroke="#FF9090" stroke-width="0.800"/>
<polygon points="0.200,3.900 6.300,1 16,5.900 16,12 10.400,15.600 0.200,11.100" fill="none" stroke="#600000" stroke-width="0.600"/></svg>
<div style="left:293px;top:505px;width:9px;height:9px;background:#fff;border:1px solid #808080;width:7px;height:7px"></div>
<div style="left:295px;top:509px;width:5px;height:1px;background:#000"></div>
<div style="left:297px;top:507px;width:1px;height:5px;background:#000"></div>
<span id="t45" class="t " style="left:328.5px;top:504px;font-size:11px;line-height:11px;color:#000;letter-spacing:-0.218px;">Schematics Tools</span>
<div style="left:302px;top:525px;width:6px;height:1px;background:repeating-linear-gradient(to right,#808080 0,#808080 1px,transparent 1px,transparent 2px);background-position:1px 0"></div>
<svg style="left:308px;top:517px;" width="16" height="16" viewBox="0 0 16 16"><polygon points="0.200,3.900 6.300,1 16,5.900 10.400,8.300" fill="#D01010"/>
<polygon points="0.200,3.900 10.400,8.300 10.400,15.600 0.200,11.100" fill="#E60A0A"/>
<polygon points="10.400,8.300 16,5.900 16,12 10.400,15.600" fill="#960000"/>
<path d="M8.300,2.800 Q9.800,0.600 11.300,2 L12.300,4" fill="none" stroke="#300000" stroke-width="1.300"/>
<path d="M0.200,7 L10.400,11.500" stroke="#B00000" stroke-width="0.800"/>
<rect x="4.300" y="7" width="1.500" height="2.500" fill="#FFE8B0"/><rect x="6.600" y="8.300" width="1.300" height="2" fill="#fff"/>
<path d="M1.500,5.500 l1,0.400 M4,6.500 l1,0.400 M7.500,8 l1,0.400 M2,9.500 l1,0.400 M7.500,12 l1,0.400 M3.500,3.300 l1,-0.400 M7,3 l1,0.400 M11,5 l1,0.400" stroke="#FF9090" stroke-width="0.800"/>
<polygon points="0.200,3.900 6.300,1 16,5.900 16,12 10.400,15.600 0.200,11.100" fill="none" stroke="#600000" stroke-width="0.600"/></svg>
<div style="left:293px;top:521px;width:9px;height:9px;background:#fff;border:1px solid #808080;width:7px;height:7px"></div>
<div style="left:295px;top:525px;width:5px;height:1px;background:#000"></div>
<div style="left:297px;top:523px;width:1px;height:5px;background:#000"></div>
<span id="t46" class="t " style="left:328.5px;top:520px;font-size:11px;line-height:11px;color:#000;letter-spacing:0.026px;">Server Tools</span>
<div style="left:302px;top:541px;width:6px;height:1px;background:repeating-linear-gradient(to right,#808080 0,#808080 1px,transparent 1px,transparent 2px);background-position:1px 0"></div>
<svg style="left:308px;top:533px;" width="16" height="16" viewBox="0 0 16 16"><polygon points="0.200,3.900 6.300,1 16,5.900 10.400,8.300" fill="#D01010"/>
<polygon points="0.200,3.900 10.400,8.300 10.400,15.600 0.200,11.100" fill="#E60A0A"/>
<polygon points="10.400,8.300 16,5.900 16,12 10.400,15.600" fill="#960000"/>
<path d="M8.300,2.800 Q9.800,0.600 11.300,2 L12.300,4" fill="none" stroke="#300000" stroke-width="1.300"/>
<path d="M0.200,7 L10.400,11.500" stroke="#B00000" stroke-width="0.800"/>
<rect x="4.300" y="7" width="1.500" height="2.500" fill="#FFE8B0"/><rect x="6.600" y="8.300" width="1.300" height="2" fill="#fff"/>
<path d="M1.500,5.500 l1,0.400 M4,6.500 l1,0.400 M7.500,8 l1,0.400 M2,9.500 l1,0.400 M7.500,12 l1,0.400 M3.500,3.300 l1,-0.400 M7,3 l1,0.400 M11,5 l1,0.400" stroke="#FF9090" stroke-width="0.800"/>
<polygon points="0.200,3.900 6.300,1 16,5.900 16,12 10.400,15.600 0.200,11.100" fill="none" stroke="#600000" stroke-width="0.600"/></svg>
<div style="left:293px;top:537px;width:9px;height:9px;background:#fff;border:1px solid #808080;width:7px;height:7px"></div>
<div style="left:295px;top:541px;width:5px;height:1px;background:#000"></div>
<div style="left:297px;top:539px;width:1px;height:5px;background:#000"></div>
<span id="t47" class="t " style="left:328.5px;top:536px;font-size:11px;line-height:11px;color:#000;letter-spacing:-0.044px;">Spatial Analyst Tools</span>
<div style="left:302px;top:557px;width:6px;height:1px;background:repeating-linear-gradient(to right,#808080 0,#808080 1px,transparent 1px,transparent 2px);background-position:1px 0"></div>
<svg style="left:308px;top:549px;" width="16" height="16" viewBox="0 0 16 16"><polygon points="0.200,3.900 6.300,1 16,5.900 10.400,8.300" fill="#D01010"/>
<polygon points="0.200,3.900 10.400,8.300 10.400,15.600 0.200,11.100" fill="#E60A0A"/>
<polygon points="10.400,8.300 16,5.900 16,12 10.400,15.600" fill="#960000"/>
<path d="M8.300,2.800 Q9.800,0.600 11.300,2 L12.300,4" fill="none" stroke="#300000" stroke-width="1.300"/>
<path d="M0.200,7 L10.400,11.500" stroke="#B00000" stroke-width="0.800"/>
<rect x="4.300" y="7" width="1.500" height="2.500" fill="#FFE8B0"/><rect x="6.600" y="8.300" width="1.300" height="2" fill="#fff"/>
<path d="M1.500,5.500 l1,0.400 M4,6.500 l1,0.400 M7.500,8 l1,0.400 M2,9.500 l1,0.400 M7.500,12 l1,0.400 M3.500,3.300 l1,-0.400 M7,3 l1,0.400 M11,5 l1,0.400" stroke="#FF9090" stroke-width="0.800"/>
<polygon points="0.200,3.900 6.300,1 16,5.900 16,12 10.400,15.600 0.200,11.100" fill="none" stroke="#600000" stroke-width="0.600"/></svg>
<div style="left:293px;top:553px;width:9px;height:9px;background:#fff;border:1px solid #808080;width:7px;height:7px"></div>
<div style="left:295px;top:557px;width:5px;height:1px;background:#000"></div>
<div style="left:297px;top:555px;width:1px;height:5px;background:#000"></div>
<span id="t48" class="t " style="left:328.5px;top:552px;font-size:11px;line-height:11px;color:#000;letter-spacing:-0.106px;">Spatial Statistics Tools</span>
<div style="left:302px;top:573px;width:6px;height:1px;background:repeating-linear-gradient(to right,#808080 0,#808080 1px,transparent 1px,transparent 2px);background-position:1px 0"></div>
<svg style="left:308px;top:565px;" width="16" height="16" viewBox="0 0 16 16"><polygon points="0.200,3.900 6.300,1 16,5.900 10.400,8.300" fill="#D01010"/>
<polygon points="0.200,3.900 10.400,8.300 10.400,15.600 0.200,11.100" fill="#E60A0A"/>
<polygon points="10.400,8.300 16,5.900 16,12 10.400,15.600" fill="#960000"/>
<path d="M8.300,2.800 Q9.800,0.600 11.300,2 L12.300,4" fill="none" stroke="#300000" stroke-width="1.300"/>
<path d="M0.200,7 L10.400,11.500" stroke="#B00000" stroke-width="0.800"/>
<rect x="4.300" y="7" width="1.500" height="2.500" fill="#FFE8B0"/><rect x="6.600" y="8.300" width="1.300" height="2" fill="#fff"/>
<path d="M1.500,5.500 l1,0.400 M4,6.500 l1,0.400 M7.500,8 l1,0.400 M2,9.500 l1,0.400 M7.500,12 l1,0.400 M3.500,3.300 l1,-0.400 M7,3 l1,0.400 M11,5 l1,0.400" stroke="#FF9090" stroke-width="0.800"/>
<polygon points="0.200,3.900 6.300,1 16,5.900 16,12 10.400,15.600 0.200,11.100" fill="none" stroke="#600000" stroke-width="0.600"/></svg>
<div style="left:293px;top:569px;width:9px;height:9px;background:#fff;border:1px solid #808080;width:7px;height:7px"></div>
<div style="left:295px;top:573px;width:5px;height:1px;background:#000"></div>
<div style="left:297px;top:571px;width:1px;height:5px;background:#000"></div>
<span id="t49" class="t " style="left:328.5px;top:568px;font-size:11px;line-height:11px;color:#000;letter-spacing:-0.039px;">Tracking Analyst Tools</span>
<div style="left:510px;top:58px;width:802px;height:407px;background:#D4D0C8;box-shadow:inset 1px 1px 0 #D4D0C8,inset -1px -1px 0 #404040,inset 2px 2px 0 #FFFFFF,inset -2px -2px 0 #808080"></div>
<div style="left:514px;top:62px;width:794px;height:18px;background:linear-gradient(to right,#0A246A 0%,#0A246A 8%,#A6CAF0 92%,#A6CAF0 100%)"></div>
<svg style="left:515px;top:63px;" width="17" height="16" viewBox="0 0 17 16"><path d="M1.500,14.500 L10,5.500" stroke="#3A2A08" stroke-width="3.200"/>
<path d="M1.500,14.500 L10,5.500" stroke="#A88030" stroke-width="1.700"/>
<path d="M6.500,3.800 Q8.500,0.800 11.500,2.200 L15.200,6 L13.200,7.800 L10.800,5.200 L9.500,4.200" fill="#A8A0B8" stroke="#202020" stroke-width="0.900"/>
<path d="M11.500,3 L14,5.500" stroke="#fff" stroke-width="0.900" fill="none"/></svg>
<span id="t50" class="t " style="left:534px;top:66px;font-size:11px;line-height:11px;color:#fff;font-weight:bold;letter-spacing:-0.154px;">Clip</span>
<div style="left:1256px;top:64px;width:16px;height:14px;background:#D4D0C8;box-shadow:inset 1px 1px 0 #FFFFFF,inset -1px -1px 0 #404040,inset 2px 2px 0 #D4D0C8,inset -2px -2px 0 #808080;"></div>
<div style="left:1272px;top:64px;width:16px;height:14px;background:#D4D0C8;box-shadow:inset 1px 1px 0 #FFFFFF,inset -1px -1px 0 #404040,inset 2px 2px 0 #D4D0C8,inset -2px -2px 0 #808080;"></div>
<div style="left:1290px;top:64px;width:16px;height:14px;background:#D4D0C8;box-shadow:inset 1px 1px 0 #FFFFFF,inset -1px -1px 0 #404040,inset 2px 2px 0 #D4D0C8,inset -2px -2px 0 #808080;"></div>
<div style="left:1260px;top:73px;width:6px;height:2px;background:#000"></div>
<div style="left:1275px;top:66px;width:9px;height:9px;border:1px solid #000;border-top:2px solid #000;width:7px;height:6px"></div>
<svg style="left:1293px;top:66px;" width="10" height="10" viewBox="0 0 10 10"><path d="M1.300,1.500 L8.700,7.700 M8.700,1.500 L1.300,7.700" stroke="#000" stroke-width="1.700"/></svg>
<div style="left:514px;top:81px;width:588px;height:338px;background:#D4D0C8;box-shadow:inset 1px 1px 0 #808080,inset -1px -1px 0 #FFFFFF,inset 2px 2px 0 #404040,inset -2px -2px 0 #D4D0C8"></div>
<div style="left:1084px;top:83px;width:16px;height:334px;background-color:#fff;background-image:linear-gradient(45deg,#D4D0C8 25%,transparent 25%,transparent 75%,#D4D0C8 75%),linear-gradient(45deg,#D4D0C8 25%,transparent 25%,transparent 75%,#D4D0C8 75%);background-size:2px 2px;background-position:0 0,1px 1px"></div>
<div style="left:1084px;top:83px;width:16px;height:16px;background:#D4D0C8;box-shadow:inset 1px 1px 0 #D4D0C8,inset -1px -1px 0 #404040,inset 2px 2px 0 #FFFFFF,inset -2px -2px 0 #808080;"></div>
<div style="left:1092px;top:90px;width:1px;height:1px;background:#FFFFFF"></div>
<div style="left:1091px;top:91px;width:3px;height:1px;background:#FFFFFF"></div>
<div style="left:1090px;top:92px;width:5px;height:1px;background:#FFFFFF"></div>
<div style="left:1089px;top:93px;width:7px;height:1px;background:#FFFFFF"></div>
<div style="left:1091px;top:89px;width:1px;height:1px;background:#808080"></div>
<div style="left:1090px;top:90px;width:3px;height:1px;background:#808080"></div>
<div style="left:1089px;top:91px;width:5px;height:1px;background:#808080"></div>
<div style="left:1088px;top:92px;width:7px;height:1px;background:#808080"></div>
<div style="left:1084px;top:401px;width:16px;height:16px;background:#D4D0C8;box-shadow:inset 1px 1px 0 #D4D0C8,inset -1px -1px 0 #404040,inset 2px 2px 0 #FFFFFF,inset -2px -2px 0 #808080;"></div>
<div style="left:1089px;top:408px;width:7px;height:1px;background:#FFFFFF"></div>
<div style="left:1090px;top:409px;width:5px;height:1px;background:#FFFFFF"></div>
<div style="left:1091px;top:410px;width:3px;height:1px;background:#FFFFFF"></div>
<div style="left:1092px;top:411px;width:1px;height:1px;background:#FFFFFF"></div>
<div style="left:1088px;top:407px;width:7px;height:1px;background:#808080"></div>
<div style="left:1089px;top:408px;width:5px;height:1px;background:#808080"></div>
<div style="left:1090px;top:409px;width:3px;height:1px;background:#808080"></div>
<div style="left:1091px;top:410px;width:1px;height:1px;background:#808080"></div>
<span id="t51" class="t " style="left:535px;top:95px;font-size:11px;line-height:11px;color:#000;letter-spacing:0.106px;">Input Features</span>
<div style="left:535px;top:109px;width:504px;height:20px;background:#fff;box-shadow:inset 1px 1px 0 #808080,inset -1px -1px 0 #FFFFFF,inset 2px 2px 0 #404040,inset -2px -2px 0 #D4D0C8;"></div>
<div style="left:1021px;top:111px;width:16px;height:16px;background:#D4D0C8;box-shadow:inset 1px 1px 0 #FFFFFF,inset -1px -1px 0 #404040,inset 2px 2px 0 #D4D0C8,inset -2px -2px 0 #808080;"></div>
<div style="left:1025px;top:117px;width:7px;height:1px;background:#000"></div>
<div style="left:1026px;top:118px;width:5px;height:1px;background:#000"></div>
<div style="left:1027px;top:119px;width:3px;height:1px;background:#000"></div>
<div style="left:1028px;top:120px;width:1px;height:1px;background:#000"></div>
<span id="t52" class="t " style="left:540px;top:114px;font-size:11px;line-height:11px;color:#000;letter-spacing:-0.068px;">Водосбор</span>
<div style="left:1049px;top:106px;width:24px;height:25px;background:#D4D0C8;box-shadow:inset 1px 1px 0 #FFFFFF,inset -1px -1px 0 #404040,inset 2px 2px 0 #D4D0C8,inset -2px -2px 0 #808080;"></div>
<svg style="left:1053px;top:111px;" width="18" height="16" viewBox="0 0 18 16"><path d="M9.500,2.800 Q12.500,-0.800 15.800,2.800" fill="none" stroke="#000" stroke-width="1"/><path d="M13.300,3.600 L16.300,4 L16.500,1" fill="none" stroke="#000" stroke-width="1"/>
<path d="M1.500,13 V4.500 H2.500 L3.500,3.500 H6.500 L7.500,4.500 H10.500 V8.500" fill="#FFFF99" stroke="#000" stroke-width="0.900"/>
<path d="M1.500,13.300 L4.200,8.500 H16.500 L13.500,13.300 Z" fill="#808000" stroke="#000" stroke-width="0.900"/></svg>
<span id="t53" class="t " style="left:535px;top:134px;font-size:11px;line-height:11px;color:#000;letter-spacing:-0.175px;">Clip Features</span>
<div style="left:535px;top:148px;width:504px;height:20px;background:#fff;box-shadow:inset 1px 1px 0 #808080,inset -1px -1px 0 #FFFFFF,inset 2px 2px 0 #404040,inset -2px -2px 0 #D4D0C8;"></div>
<div style="left:1021px;top:150px;width:16px;height:16px;background:#D4D0C8;box-shadow:inset 1px 1px 0 #FFFFFF,inset -1px -1px 0 #404040,inset 2px 2px 0 #D4D0C8,inset -2px -2px 0 #808080;"></div>
<div style="left:1025px;top:156px;width:7px;height:1px;background:#000"></div>
<div style="left:1026px;top:157px;width:5px;height:1px;background:#000"></div>
<div style="left:1027px;top:158px;width:3px;height:1px;background:#000"></div>
<div style="left:1028px;top:159px;width:1px;height:1px;background:#000"></div>
<span id="t54" class="t " style="left:540px;top:153px;font-size:11px;line-height:11px;color:#000;letter-spacing:0.238px;">Лес</span>
<div style="left:1049px;top:145px;width:24px;height:25px;background:#D4D0C8;box-shadow:inset 1px 1px 0 #FFFFFF,inset -1px -1px 0 #404040,inset 2px 2px 0 #D4D0C8,inset -2px -2px 0 #808080;"></div>
<svg style="left:1053px;top:150px;" width="18" height="16" viewBox="0 0 18 16"><path d="M9.500,2.800 Q12.500,-0.800 15.800,2.800" fill="none" stroke="#000" stroke-width="1"/><path d="M13.300,3.600 L16.300,4 L16.500,1" fill="none" stroke="#000" stroke-width="1"/>
<path d="M1.500,13 V4.500 H2.500 L3.500,3.500 H6.500 L7.500,4.500 H10.500 V8.500" fill="#FFFF99" stroke="#000" stroke-width="0.900"/>
<path d="M1.500,13.300 L4.200,8.500 H16.500 L13.500,13.300 Z" fill="#808000" stroke="#000" stroke-width="0.900"/></svg>
<span id="t55" class="t " style="left:535px;top:173px;font-size:11px;line-height:11px;color:#000;letter-spacing:-0.039px;">Output Feature Class</span>
<div style="left:535px;top:187px;width:504px;height:20px;background:#fff;box-shadow:inset 1px 1px 0 #808080,inset -1px -1px 0 #FFFFFF,inset 2px 2px 0 #404040,inset -2px -2px 0 #D4D0C8;"></div>
<span id="t56" class="t " style="left:540px;top:192px;font-size:11px;line-height:11px;color:#000;letter-spacing:-0.071px;">D:\Лес\Водосбор_Clip1.shp</span>
<div style="left:1049px;top:184px;width:24px;height:25px;background:#D4D0C8;box-shadow:inset 1px 1px 0 #FFFFFF,inset -1px -1px 0 #404040,inset 2px 2px 0 #D4D0C8,inset -2px -2px 0 #808080;"></div>
<svg style="left:1053px;top:189px;" width="18" height="16" viewBox="0 0 18 16"><path d="M9.500,2.800 Q12.500,-0.800 15.800,2.800" fill="none" stroke="#000" stroke-width="1"/><path d="M13.300,3.600 L16.300,4 L16.500,1" fill="none" stroke="#000" stroke-width="1"/>
<path d="M1.500,13 V4.500 H2.500 L3.500,3.500 H6.500 L7.500,4.500 H10.500 V8.500" fill="#FFFF99" stroke="#000" stroke-width="0.900"/>
<path d="M1.500,13.300 L4.200,8.500 H16.500 L13.500,13.300 Z" fill="#808000" stroke="#000" stroke-width="0.900"/></svg>
<span id="t57" class="t " style="left:535px;top:212px;font-size:11px;line-height:11px;color:#000;letter-spacing:-0.097px;">XY Tolerance (optional)</span>
<div style="left:535px;top:223px;width:388px;height:20px;background:#fff;box-shadow:inset 1px 1px 0 #808080,inset -1px -1px 0 #FFFFFF,inset 2px 2px 0 #404040,inset -2px -2px 0 #D4D0C8;"></div>
<div style="left:938px;top:223px;width:134px;height:20px;background:#fff;box-shadow:inset 1px 1px 0 #808080,inset -1px -1px 0 #FFFFFF,inset 2px 2px 0 #404040,inset -2px -2px 0 #D4D0C8;"></div>
<div style="left:1054px;top:225px;width:16px;height:16px;background:#D4D0C8;box-shadow:inset 1px 1px 0 #FFFFFF,inset -1px -1px 0 #404040,inset 2px 2px 0 #D4D0C8,inset -2px -2px 0 #808080;"></div>
<div style="left:1058px;top:231px;width:7px;height:1px;background:#000"></div>
<div style="left:1059px;top:232px;width:5px;height:1px;background:#000"></div>
<div style="left:1060px;top:233px;width:3px;height:1px;background:#000"></div>
<div style="left:1061px;top:234px;width:1px;height:1px;background:#000"></div>
<span id="t58" class="t " style="left:941.5px;top:228px;font-size:11px;line-height:11px;color:#000;letter-spacing:0.139px;">Meters</span>
<div style="left:750px;top:427px;width:75px;height:23px;background:#D4D0C8;box-shadow:inset 1px 1px 0 #FFFFFF,inset -1px -1px 0 #404040,inset 2px 2px 0 #D4D0C8,inset -2px -2px 0 #808080;"></div>
<span id="t59" class="t " style="left:780.0px;top:433px;font-size:11px;line-height:11px;color:#000;letter-spacing:0.414px;">OK</span>
<div style="left:830px;top:427px;width:75px;height:23px;background:#D4D0C8;box-shadow:inset 1px 1px 0 #FFFFFF,inset -1px -1px 0 #404040,inset 2px 2px 0 #D4D0C8,inset -2px -2px 0 #808080;"></div>
<span id="t60" class="t " style="left:851.0px;top:433px;font-size:11px;line-height:11px;color:#000;letter-spacing:0.014px;">Cancel</span>
<div style="left:910px;top:427px;width:90px;height:23px;background:#D4D0C8;box-shadow:inset 1px 1px 0 #FFFFFF,inset -1px -1px 0 #404040,inset 2px 2px 0 #D4D0C8,inset -2px -2px 0 #808080;"></div>
<span id="t61" class="t " style="left:917.0px;top:433px;font-size:11px;line-height:11px;color:#000;letter-spacing:0.064px;">Environments...</span>
<div style="left:1005px;top:427px;width:90px;height:23px;background:#D4D0C8;box-shadow:inset 1px 1px 0 #FFFFFF,inset -1px -1px 0 #404040,inset 2px 2px 0 #D4D0C8,inset -2px -2px 0 #808080;"></div>
<span id="t62" class="t " style="left:1019.0px;top:433px;font-size:11px;line-height:11px;color:#000;letter-spacing:-0.082px;">&lt;&lt; Hide Help</span>
<div style="left:1116px;top:427px;width:75px;height:23px;background:#D4D0C8;box-shadow:inset 1px 1px 0 #FFFFFF,inset -1px -1px 0 #404040,inset 2px 2px 0 #D4D0C8,inset -2px -2px 0 #808080;"></div>
<span id="t63" class="t " style="left:1131.5px;top:433px;font-size:11px;line-height:11px;color:#000;letter-spacing:-0.067px;">Tool Help</span>
<div style="left:1104px;top:81px;width:205px;height:338px;background:#fff;box-shadow:inset 1px 1px 0 #808080,inset -1px -1px 0 #FFFFFF,inset 2px 2px 0 #404040,inset -2px -2px 0 #D4D0C8;"></div>
<div style="left:1290px;top:83px;width:16px;height:334px;background-color:#fff;background-image:linear-gradient(45deg,#D4D0C8 25%,transparent 25%,transparent 75%,#D4D0C8 75%),linear-gradient(45deg,#D4D0C8 25%,transparent 25%,transparent 75%,#D4D0C8 75%);background-size:2px 2px;background-position:0 0,1px 1px"></div>
<div style="left:1290px;top:83px;width:16px;height:16px;background:#D4D0C8;box-shadow:inset 1px 1px 0 #D4D0C8,inset -1px -1px 0 #404040,inset 2px 2px 0 #FFFFFF,inset -2px -2px 0 #808080;"></div>
<div style="left:1297px;top:89px;width:1px;height:1px;background:#000"></div>
<div style="left:1296px;top:90px;width:3px;height:1px;background:#000"></div>
<div style="left:1295px;top:91px;width:5px;height:1px;background:#000"></div>
<div style="left:1294px;top:92px;width:7px;height:1px;background:#000"></div>
<div style="left:1290px;top:401px;width:16px;height:16px;background:#D4D0C8;box-shadow:inset 1px 1px 0 #D4D0C8,inset -1px -1px 0 #404040,inset 2px 2px 0 #FFFFFF,inset -2px -2px 0 #808080;"></div>
<div style="left:1294px;top:407px;width:7px;height:1px;background:#000"></div>
<div style="left:1295px;top:408px;width:5px;height:1px;background:#000"></div>
<div style="left:1296px;top:409px;width:3px;height:1px;background:#000"></div>
<div style="left:1297px;top:410px;width:1px;height:1px;background:#000"></div>
<div style="left:1290px;top:99px;width:16px;height:202px;background:#D4D0C8;box-shadow:inset 1px 1px 0 #D4D0C8,inset -1px -1px 0 #404040,inset 2px 2px 0 #FFFFFF,inset -2px -2px 0 #808080;"></div>
<span id="t64" class="t " style="left:1122px;top:93px;font-size:16px;line-height:16px;color:#000;font-weight:bold;letter-spacing:0.234px;">Clip</span>
<span id="t65" class="t " style="left:1122px;top:131px;font-size:13px;line-height:13px;color:#111;letter-spacing:0.123px;">Extracts input features that</span>
<span id="t66" class="t " style="left:1122px;top:147px;font-size:13px;line-height:13px;color:#111;letter-spacing:-0.054px;">overlay the clip features.</span>
<span id="t67" class="t " style="left:1155px;top:197.5px;font-size:11px;line-height:11px;color:#222;font-weight:bold;letter-spacing:0.080px;">INPUT</span>
<div style="left:1126px;top:217px;width:96px;height:89px;background:#bcbcbc"></div>
<svg style="left:1123px;top:214px;" width="96" height="89" viewBox="0 0 96 89"><rect x="0" y="0" width="96" height="89" fill="#A3C98B"/>
<path d="M0,0 H13 C20,14 25,22 29,32.600 C33,44 34,50 37.400,53.600 C44,60 50,63 56.400,66.300 C64,70 70,72 75.300,76.800 C79,80 82,84 83.700,89 H35.800 C35,84 34,80 31.100,76.800 C27,72 20,70 14.300,66.300 C8,62 4,57 0,52.600 Z" fill="#AABBD9" stroke="#222" stroke-width="0.700"/>
<path d="M64.800,0 C66,8 65,16 63.700,24.200 C63,30 65,34 68,36.800 C71,40 75,42.500 79.500,43.100 C85,42.500 90,40 96,37.400 V0 Z" fill="#DAD6E2" stroke="#222" stroke-width="0.700"/>
<circle cx="41" cy="23.100" r="3.800" fill="#111"/><circle cx="84.800" cy="68.800" r="3.800" fill="#111"/>
<rect x="0.350" y="0.350" width="95.300" height="88.300" fill="none" stroke="#666" stroke-width="0.700"/></svg>
<div style="left:1164px;top:321px;width:14px;height:3px;background:#222"></div>
<div style="left:1169.5px;top:316px;width:3px;height:13px;background:#222"></div>
<span id="t68" class="t " style="left:1134px;top:340px;font-size:10.5px;line-height:10.5px;color:#222;font-weight:bold;letter-spacing:-0.108px;">CLIP FEATURE</span>
<svg style="left:1130px;top:355px;" width="85" height="62" viewBox="0 0 85 62"><circle cx="43.800" cy="39.800" r="35.600" fill="#b0b0b0"/><circle cx="40.800" cy="38.800" r="35.600" fill="#FFF8B0" stroke="#333" stroke-width="0.800"/></svg>
</div>
</body></html>
